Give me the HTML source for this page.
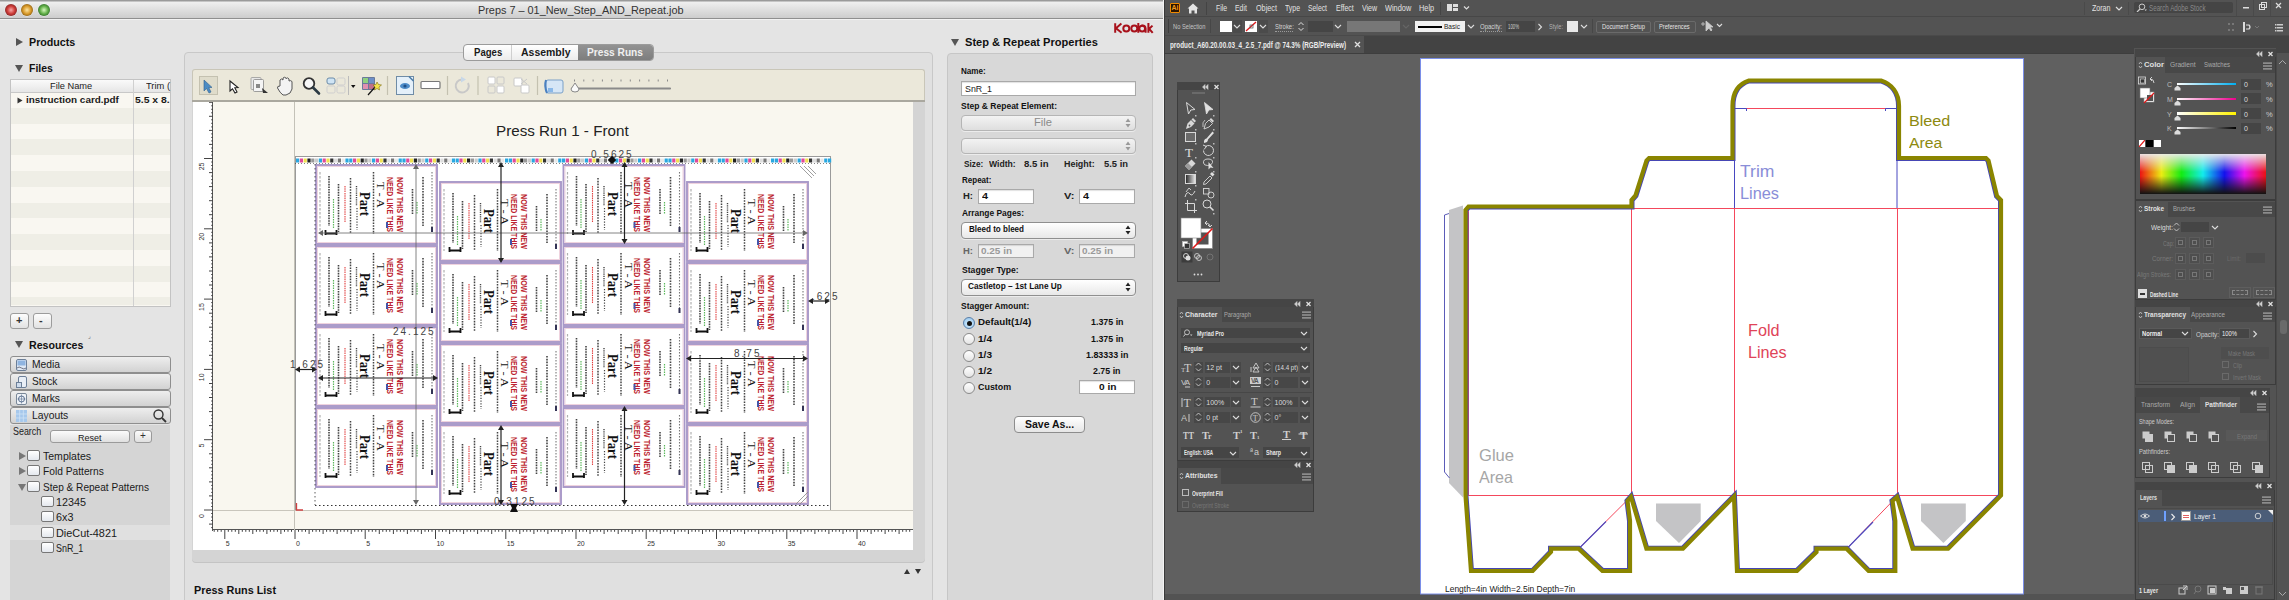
<!DOCTYPE html><html><head><meta charset="utf-8"><style>
*{box-sizing:border-box;margin:0;padding:0}
html,body{width:2289px;height:600px;overflow:hidden;background:#e6e6e6}
body{position:relative;font-family:"Liberation Sans",sans-serif;}
.a{position:absolute}
.t{position:absolute;white-space:nowrap;line-height:1}
.b{font-weight:bold}
</style></head><body>
<div class="a" style="left:0px;top:0px;width:1163px;height:600px;background:#e4e4e4"></div>
<div class="a" style="left:0px;top:0px;width:1163px;height:18px;background:linear-gradient(#9a9a9a 0,#9a9a9a 1px,#efefef 2px,#cdcdcd 100%)"></div>
<div class="a" style="left:5.300000000000001px;top:3.5px;width:12px;height:12px;border-radius:50%;background:radial-gradient(circle farthest-side at 50% 50%,#f8a8a8 0%,#cc3a36 65%,#8e2a2a 100%);box-shadow:0 0 0 0.5px rgba(255,255,255,.6)"></div>
<div class="a" style="left:21.3px;top:3.5px;width:12px;height:12px;border-radius:50%;background:radial-gradient(circle farthest-side at 50% 50%,#fde4a0 0%,#d99a2a 65%,#9a6a18 100%);box-shadow:0 0 0 0.5px rgba(255,255,255,.6)"></div>
<div class="a" style="left:37.5px;top:3.5px;width:12px;height:12px;border-radius:50%;background:radial-gradient(circle farthest-side at 50% 50%,#d8f8c0 0%,#62b048 65%,#3a7a30 100%);box-shadow:0 0 0 0.5px rgba(255,255,255,.6)"></div>
<div class="a" style="left:0px;top:18px;width:1163px;height:1px;background:#8f8f8f"></div>
<div class="a" style="left:0px;top:19px;width:1163px;height:1px;background:#f2f2f2"></div>
<div class="t" style="left:478.3px;top:4.51px;font-size:10.5px;color:#333;font-family:'Liberation Sans';transform-origin:0 0;transform:scaleX(1.0355);">Preps 7 – 01_New_Step_AND_Repeat.job</div>
<div class="a" style="left:1163px;top:0px;width:1px;height:600px;background:#f4f4f4"></div>
<div class="a" style="left:16px;top:38px;width:0;height:0;border-top:4px solid transparent;border-bottom:4px solid transparent;border-left:7px solid #555"></div>
<div class="t" style="left:28.7px;top:36.89px;font-size:11px;color:#111;font-family:'Liberation Sans';font-weight:bold;transform-origin:0 0;transform:scaleX(0.9712);">Products</div>
<div class="a" style="left:15px;top:65px;width:0;height:0;border-left:4px solid transparent;border-right:4px solid transparent;border-top:7px solid #555"></div>
<div class="t" style="left:28.7px;top:62.69px;font-size:11px;color:#111;font-family:'Liberation Sans';font-weight:bold;transform-origin:0 0;transform:scaleX(0.9495);">Files</div>
<div class="a" style="left:10px;top:79px;width:161px;height:228px;background:#f9f7f1;border:1px solid #c3c3c3"></div>
<div class="a" style="left:11px;top:107.8px;width:159px;height:15.8px;background:#efeee6"></div>
<div class="a" style="left:11px;top:139.4px;width:159px;height:15.8px;background:#efeee6"></div>
<div class="a" style="left:11px;top:171.0px;width:159px;height:15.8px;background:#efeee6"></div>
<div class="a" style="left:11px;top:202.60000000000002px;width:159px;height:15.8px;background:#efeee6"></div>
<div class="a" style="left:11px;top:234.20000000000002px;width:159px;height:15.8px;background:#efeee6"></div>
<div class="a" style="left:11px;top:265.8px;width:159px;height:15.8px;background:#efeee6"></div>
<div class="a" style="left:11px;top:297.4px;width:159px;height:7.600000000000023px;background:#efeee6"></div>
<div class="a" style="left:11px;top:80px;width:159px;height:13px;background:linear-gradient(#fafafa,#e6e6e6);border-bottom:1px solid #c8c8c8"></div>
<div class="a" style="left:133px;top:80px;width:1px;height:226px;background:#d0d0d0"></div>
<div class="t" style="left:50px;top:80.66px;font-size:9.5px;color:#222;font-family:'Liberation Sans';transform-origin:0 0;transform:scaleX(0.9749);">File Name</div>
<div class="t" style="left:146px;top:80.66px;font-size:9.5px;color:#222;font-family:'Liberation Sans';transform-origin:0 0;transform:scaleX(0.9820);">Trim (</div>
<svg class="a" style="left:17px;top:97px" width="6" height="7"><path d="M0.5 0.5 L5.5 3.5 L0.5 6.5Z" fill="#333"/></svg>
<div class="t" style="left:25.8px;top:95.26px;font-size:9.5px;color:#1a1a1a;font-family:'Liberation Sans';font-weight:bold;transform-origin:0 0;transform:scaleX(1.0416);">instruction card.pdf</div>
<div class="t" style="left:135.3px;top:95.26px;font-size:9.5px;color:#1a1a1a;font-family:'Liberation Sans';font-weight:bold;transform-origin:0 0;transform:scaleX(1.0950);">5.5 x 8.</div>
<div class="a" style="left:10px;top:313px;width:19px;height:16px;background:linear-gradient(#fdfdfd,#e2e2e2);border:1px solid #9c9c9c;border-radius:3px"></div>
<div class="t" style="left:16px;top:315px;font-size:11px;color:#333;font-weight:bold">+</div>
<div class="a" style="left:33px;top:313px;width:19px;height:16px;background:linear-gradient(#fdfdfd,#e2e2e2);border:1px solid #9c9c9c;border-radius:3px"></div>
<div class="t" style="left:39px;top:315px;font-size:11px;color:#333;font-weight:bold">-</div>
<div class="t" style="left:88px;top:333px;font-size:6px;color:#666;">⌟</div>
<div class="a" style="left:15px;top:341px;width:0;height:0;border-left:4px solid transparent;border-right:4px solid transparent;border-top:7px solid #555"></div>
<div class="t" style="left:28.6px;top:339.69px;font-size:11px;color:#111;font-family:'Liberation Sans';font-weight:bold;transform-origin:0 0;transform:scaleX(0.9671);">Resources</div>
<div class="a" style="left:10px;top:356px;width:161px;height:17px;background:linear-gradient(#eeeeee,#d2d2d2);border:1px solid #8e8e8e;border-radius:3px"></div>
<svg class="a" style="left:16px;top:358.5px" width="12" height="13"><rect x="0.5" y="0.5" width="10" height="11" rx="1.5" fill="#dfe9f5" stroke="#6c7f98"/><rect x="1.5" y="1.5" width="8" height="5" fill="#8fb4e0"/><path d="M1 9 Q3 7 5.5 9 Q8 11 10 9" fill="none" stroke="#556" stroke-width="0.8"/></svg>
<div class="t" style="left:32px;top:359.31px;font-size:10.5px;color:#1a1a1a;font-family:'Liberation Sans';transform-origin:0 0;transform:scaleX(0.9792);">Media</div>
<div class="a" style="left:10px;top:373px;width:161px;height:17px;background:linear-gradient(#eeeeee,#d2d2d2);border:1px solid #8e8e8e;border-radius:3px"></div>
<svg class="a" style="left:16px;top:375.5px" width="12" height="13"><rect x="2.5" y="0.5" width="8" height="11" rx="1.5" fill="#e8eef6" stroke="#6c7f98"/><rect x="0.5" y="6.5" width="5" height="5" fill="#cfdcec" stroke="#6c7f98"/></svg>
<div class="t" style="left:32px;top:376.31px;font-size:10.5px;color:#1a1a1a;font-family:'Liberation Sans';transform-origin:0 0;transform:scaleX(0.9673);">Stock</div>
<div class="a" style="left:10px;top:390px;width:161px;height:17px;background:linear-gradient(#eeeeee,#d2d2d2);border:1px solid #8e8e8e;border-radius:3px"></div>
<svg class="a" style="left:16px;top:392.5px" width="12" height="13"><rect x="0.5" y="0.5" width="10" height="11" rx="1.5" fill="#eef2f7" stroke="#7a8898"/><circle cx="5.5" cy="6" r="3" fill="none" stroke="#5a7090"/><path d="M5.5 1.5 L5.5 10.5 M1.5 6 L9.5 6" stroke="#5a7090" stroke-width="0.6"/></svg>
<div class="t" style="left:32px;top:393.31px;font-size:10.5px;color:#1a1a1a;font-family:'Liberation Sans';transform-origin:0 0;transform:scaleX(0.9797);">Marks</div>
<div class="a" style="left:10px;top:407px;width:161px;height:17px;background:linear-gradient(#eeeeee,#d2d2d2);border:1px solid #8e8e8e;border-radius:3px"></div>
<svg class="a" style="left:16px;top:409.5px" width="12" height="13"><rect x="0" y="0" width="11" height="12" fill="#a6c8ec"/><path d="M0 4 L11 4 M0 8 L11 8 M3.7 0 L3.7 12 M7.3 0 L7.3 12" stroke="#cfe2f6" stroke-width="0.8"/></svg>
<div class="t" style="left:32px;top:410.31px;font-size:10.5px;color:#1a1a1a;font-family:'Liberation Sans';transform-origin:0 0;transform:scaleX(0.9871);">Layouts</div>
<svg class="a" style="left:152px;top:408px" width="16" height="16"><circle cx="6.5" cy="6.5" r="4.5" fill="none" stroke="#333" stroke-width="1.4"/><line x1="10" y1="10" x2="14" y2="14" stroke="#333" stroke-width="1.8"/></svg>
<div class="a" style="left:10px;top:425px;width:160px;height:175px;background:#d5d5d5"></div>
<div class="t" style="left:13.4px;top:427.24px;font-size:10px;color:#222;font-family:'Liberation Sans';transform-origin:0 0;transform:scaleX(0.8901);">Search</div>
<div class="a" style="left:50px;top:430px;width:80px;height:13px;background:linear-gradient(#fbfbfb,#e0e0e0);border:1px solid #9a9a9a;border-radius:3px"></div>
<div class="t" style="left:77.6px;top:432.76px;font-size:9.5px;color:#222;font-family:'Liberation Sans';transform-origin:0 0;transform:scaleX(0.9510);">Reset</div>
<div class="a" style="left:134px;top:430px;width:18px;height:13px;background:linear-gradient(#fbfbfb,#e0e0e0);border:1px solid #9a9a9a;border-radius:3px"></div>
<div class="t" style="left:140px;top:431px;font-size:10px;color:#333;">+</div>
<div class="a" style="left:10px;top:525px;width:160px;height:15px;background:#e0e0e0"></div>
<div class="a" style="left:19px;top:452px;width:0;height:0;border-top:4px solid transparent;border-bottom:4px solid transparent;border-left:7px solid #777"></div>
<div class="a" style="left:27px;top:450px;width:13px;height:11px;background:linear-gradient(#ffffff,#e4e8ee);border:1px solid #777;border-radius:2px"></div>
<div class="t" style="left:42.7px;top:451.11px;font-size:10.5px;color:#1a1a1a;font-family:'Liberation Sans';transform-origin:0 0;transform:scaleX(1.0031);">Templates</div>
<div class="a" style="left:19px;top:467px;width:0;height:0;border-top:4px solid transparent;border-bottom:4px solid transparent;border-left:7px solid #777"></div>
<div class="a" style="left:27px;top:465px;width:13px;height:11px;background:linear-gradient(#ffffff,#e4e8ee);border:1px solid #777;border-radius:2px"></div>
<div class="t" style="left:42.7px;top:466.11px;font-size:10.5px;color:#1a1a1a;font-family:'Liberation Sans';transform-origin:0 0;transform:scaleX(0.9737);">Fold Patterns</div>
<div class="a" style="left:18px;top:484px;width:0;height:0;border-left:4px solid transparent;border-right:4px solid transparent;border-top:7px solid #777"></div>
<div class="a" style="left:27px;top:481px;width:13px;height:11px;background:linear-gradient(#ffffff,#e4e8ee);border:1px solid #777;border-radius:2px"></div>
<div class="t" style="left:42.7px;top:482.11px;font-size:10.5px;color:#1a1a1a;font-family:'Liberation Sans';transform-origin:0 0;transform:scaleX(0.9609);">Step &amp; Repeat Patterns</div>
<div class="a" style="left:41px;top:496px;width:13px;height:11px;background:linear-gradient(#ffffff,#e4e8ee);border:1px solid #777;border-radius:2px"></div>
<div class="t" style="left:55.7px;top:497.11px;font-size:10.5px;color:#1a1a1a;font-family:'Liberation Sans';transform-origin:0 0;transform:scaleX(1.0276);">12345</div>
<div class="a" style="left:41px;top:511px;width:13px;height:11px;background:linear-gradient(#ffffff,#e4e8ee);border:1px solid #777;border-radius:2px"></div>
<div class="t" style="left:55.7px;top:512.11px;font-size:10.5px;color:#1a1a1a;font-family:'Liberation Sans';transform-origin:0 0;transform:scaleX(1.0279);">6x3</div>
<div class="a" style="left:41px;top:527px;width:13px;height:11px;background:linear-gradient(#ffffff,#e4e8ee);border:1px solid #777;border-radius:2px"></div>
<div class="t" style="left:55.7px;top:528.11px;font-size:10.5px;color:#1a1a1a;font-family:'Liberation Sans';transform-origin:0 0;transform:scaleX(1.0348);">DieCut-4821</div>
<div class="a" style="left:41px;top:542px;width:13px;height:11px;background:linear-gradient(#ffffff,#e4e8ee);border:1px solid #777;border-radius:2px"></div>
<div class="t" style="left:55.7px;top:543.11px;font-size:10.5px;color:#1a1a1a;font-family:'Liberation Sans';transform-origin:0 0;transform:scaleX(0.8504);">SnR_1</div>
<div class="a" style="left:184px;top:52px;width:749px;height:560px;background:#e0e0e0;border:1px solid #c8c8c8;border-radius:4px"></div>
<div class="a" style="left:463px;top:44px;width:191px;height:17px;border:1px solid #9b9b9b;border-radius:4px;background:linear-gradient(#ffffff,#ececec);overflow:hidden"><div class="a" style="left:47px;top:0;width:1px;height:15px;background:#cfcfcf"></div><div class="a" style="left:114px;top:0;width:76px;height:15px;background:linear-gradient(#939393,#7d7d7d)"></div></div>
<div class="t" style="left:473.8px;top:46.81px;font-size:10.5px;color:#1a1a1a;font-family:'Liberation Sans';font-weight:bold;transform-origin:0 0;transform:scaleX(0.9116);">Pages</div>
<div class="t" style="left:520.5px;top:46.81px;font-size:10.5px;color:#1a1a1a;font-family:'Liberation Sans';font-weight:bold;transform-origin:0 0;transform:scaleX(0.9979);">Assembly</div>
<div class="t" style="left:587px;top:46.81px;font-size:10.5px;color:#f0f0f0;font-family:'Liberation Sans';font-weight:bold;transform-origin:0 0;transform:scaleX(0.9693);">Press Runs</div>
<div class="a" style="left:192px;top:69px;width:733px;height:33px;background:#ebe8da;border:1px solid #c9c6b8;border-bottom:1.5px solid #a9a79f;border-radius:3px 3px 0 0"></div>
<svg class="a" style="left:192px;top:69px" width="733" height="32" viewBox="192 69 733 32"><rect x="199.5" y="76.5" width="18" height="18" fill="#dfdccb" stroke="#c4c1b0" stroke-width="1"/><path d="M204 80 L204 91 L206.5 88.5 L209 93 L211 92 L208.8 87.6 L212 87.4Z" fill="#4a8bc4" stroke="#2f5f8f" stroke-width="0.6"/><path d="M230 81 L230 91 L232.5 88.8 L235 93 L237 92 L234.8 87.8 L238 87.6Z" fill="#fff" stroke="#222" stroke-width="1.1"/><rect x="251" y="77.5" width="10" height="12" rx="1" fill="#e8e8e8" stroke="#999" stroke-width="0.8"/><rect x="253.5" y="79.5" width="10" height="12" rx="1" fill="#f4f4f4" stroke="#888" stroke-width="0.8"/><rect x="256" y="84" width="4" height="4" fill="#888"/><path d="M262 88 L268 93 L263 93Z" fill="#333"/><path d="M280 85 L280 80 Q281.5 78 283 80 L283 78 Q284.5 76.5 286 78 L286 78.5 Q287.5 77 289 79 L289 81 Q290.5 80 292 81.5 L292 89 Q291 94 286 95 L283 95 Q280 93 277.5 88 Q277 86 280 86Z" fill="#f3f3f3" stroke="#555" stroke-width="1"/><circle cx="309" cy="83.5" r="5.3" fill="#f7f7f7" stroke="#333" stroke-width="1.8"/><line x1="313" y1="87.5" x2="319" y2="93.5" stroke="#2c3a44" stroke-width="2.6" stroke-linecap="round"/><rect x="327" y="78" width="8" height="6" rx="2" fill="#cfe4f4" stroke="#6a8aa8" stroke-width="1"/><rect x="337" y="78" width="8" height="7" rx="1.5" fill="none" stroke="#cfcfcf" stroke-width="1"/><rect x="327" y="86" width="8" height="7" rx="1.5" fill="none" stroke="#cfcfcf" stroke-width="1"/><rect x="337" y="86" width="8" height="7" rx="1.5" fill="none" stroke="#cfcfcf" stroke-width="1"/><line x1="348.5" y1="76" x2="348.5" y2="95" stroke="#bbb"/><path d="M351 85 L355.5 85 L353.2 88Z" fill="#111"/><rect x="362" y="77" width="13" height="13" rx="1" fill="#6a7a9a"/><rect x="363" y="78" width="5" height="5" fill="#8fd080"/><rect x="369" y="78" width="5" height="5" fill="#6e8fc8"/><rect x="363" y="84" width="5" height="5" fill="#e090b0"/><rect x="369" y="84" width="5" height="5" fill="#c0708a"/><line x1="368" y1="95" x2="376" y2="86" stroke="#111" stroke-width="1.2"/><path d="M377 82 L378.5 84.5 L381.5 85 L379 87 L379.5 90 L377 88.5 L374.5 90 L375 87 L373 85 L376 84.5Z" fill="#f2e24a" stroke="#7a6a10" stroke-width="0.6"/><line x1="387.5" y1="76" x2="387.5" y2="95" stroke="#c4c1b0" stroke-width="1.2"/><rect x="396.5" y="76.5" width="17" height="18" fill="#e4f0fa" stroke="#6f8ca6" stroke-width="1"/><path d="M409 76.5 L413.5 81" stroke="#4a7aa6" stroke-width="1.5"/><ellipse cx="405" cy="86" rx="5" ry="3" fill="#4d8cc8"/><circle cx="405" cy="86" r="1.6" fill="#1e4f88"/><rect x="421" y="81.5" width="19" height="7" rx="1" fill="#fff" stroke="#777" stroke-width="1.2"/><line x1="447.5" y1="76" x2="447.5" y2="95" stroke="#c4c1b0" stroke-width="1.2"/><path d="M468 83 A6.5 6.5 0 1 1 462 79.5" fill="none" stroke="#c8c8c8" stroke-width="2"/><path d="M461 76.5 L466 79.5 L461 82.5Z" fill="#c8d8e8"/><line x1="478" y1="76" x2="478" y2="95" stroke="#c4c1b0" stroke-width="1.2"/><rect x="488" y="77" width="7" height="7" rx="1" fill="#fff" stroke="#c8c8c8" stroke-width="1"/><rect x="497" y="77" width="7" height="7" rx="1" fill="none" stroke="#c8c8c8" stroke-width="1"/><rect x="488" y="86" width="7" height="7" rx="1" fill="none" stroke="#c8c8c8" stroke-width="1"/><rect x="497" y="86" width="7" height="7" rx="1" fill="#fff" stroke="#c8c8c8" stroke-width="1"/><rect x="514" y="78" width="8" height="8" rx="1" fill="#fff" stroke="#c8c8c8"/><rect x="521" y="85" width="8" height="8" rx="1" fill="#fff" stroke="#c8c8c8"/><path d="M521 79 L527 84 M527 79 L521 84" stroke="#c8c8c8"/><line x1="537.5" y1="76" x2="537.5" y2="95" stroke="#c4c1b0" stroke-width="1.2"/><rect x="546" y="80" width="17" height="13" rx="2" fill="#d6e6f6" stroke="#7aa0c8" stroke-width="1"/><path d="M546 80 Q544 86 547 93" fill="none" stroke="#4a80c0" stroke-width="2"/><rect x="548" y="88" width="5" height="4" fill="#8ab8e8"/><line x1="572" y1="88.5" x2="670" y2="88.5" stroke="#8a8a8a" stroke-width="2.2" stroke-linecap="round"/><rect x="574.0" y="79.5" width="1" height="2" fill="#8a8a8a"/><rect x="583.3" y="79.5" width="1" height="2" fill="#8a8a8a"/><rect x="592.6" y="79.5" width="1" height="2" fill="#8a8a8a"/><rect x="601.9" y="79.5" width="1" height="2" fill="#8a8a8a"/><rect x="611.2" y="79.5" width="1" height="2" fill="#8a8a8a"/><rect x="620.5" y="79.5" width="1" height="2" fill="#8a8a8a"/><rect x="629.8" y="79.5" width="1" height="2" fill="#8a8a8a"/><rect x="639.1" y="79.5" width="1" height="2" fill="#8a8a8a"/><rect x="648.4" y="79.5" width="1" height="2" fill="#8a8a8a"/><rect x="657.7" y="79.5" width="1" height="2" fill="#8a8a8a"/><rect x="667.0" y="79.5" width="1" height="2" fill="#8a8a8a"/><path d="M575 83 L579 89 Q579 92 575 92 Q571 92 571 89Z" fill="#fafafa" stroke="#888" stroke-width="1"/></svg>
<div class="a" style="left:192px;top:101px;width:733px;height:461px;background:#d4d4d4;border-radius:0 0 4px 4px;box-shadow:0 1px 0 #c4c4c4"></div>
<div class="a" style="left:193px;top:101px;width:720px;height:449px;background:#f9f7ef"></div>
<div class="a" style="left:193px;top:101px;width:20px;height:449px;background:#ffffff"></div>
<div class="a" style="left:193px;top:530px;width:720px;height:20px;background:#ffffff"></div>
<div class="a" style="left:212px;top:101px;width:1px;height:430px;background:#555"></div>
<div class="a" style="left:212px;top:529px;width:701px;height:1px;background:#555"></div>
<div class="a" style="left:294px;top:101px;width:1px;height:429px;background:#c4c2b8"></div>
<svg class="a" style="left:0;top:0" width="1163" height="600" viewBox="0 0 1163 600"><defs><clipPath id="cv"><rect x="193" y="101" width="720" height="449"/></clipPath><symbol id="card" viewBox="0 0 123 81" width="123" height="81" overflow="visible"><rect x="1" y="1" width="121" height="79" fill="#fff" stroke="#a898c8" stroke-width="1.9"/><rect x="2.5" y="2.5" width="118" height="76" fill="none" stroke="#efd3de" stroke-width="1"/><line x1="5" y1="8" x2="5" y2="70" stroke="#b0b0b0" stroke-width="1.2" stroke-dasharray="2.5 1.5" opacity="1"/><line x1="14" y1="12" x2="14" y2="62" stroke="#444" stroke-width="1.6" stroke-dasharray="1.6 1" opacity="1"/><line x1="18.5" y1="35" x2="18.5" y2="65" stroke="#5cb85c" stroke-width="1.2" stroke-dasharray="1.5 1" opacity="1"/><line x1="23.5" y1="20" x2="23.5" y2="68" stroke="#444" stroke-width="1.6" stroke-dasharray="1.6 1" opacity="1"/><line x1="30" y1="22" x2="30" y2="58" stroke="#e04040" stroke-width="1.1" stroke-dasharray="1.5 0.8" opacity="1"/><line x1="35.5" y1="14" x2="35.5" y2="70" stroke="#444" stroke-width="1.5" stroke-dasharray="1.6 1.2" opacity="1"/><line x1="41.5" y1="22" x2="41.5" y2="42" stroke="#444" stroke-width="1.4" stroke-dasharray="1.2 1" opacity="1"/><line x1="42" y1="44" x2="42" y2="66" stroke="#444" stroke-width="1.2" stroke-dasharray="1.2 1.5" opacity="1"/><text transform="translate(45,28) rotate(90)" font-family="Liberation Serif" font-size="14" font-weight="bold" fill="#111" textLength="24" lengthAdjust="spacingAndGlyphs">Part</text><line x1="58.5" y1="8" x2="58.5" y2="70" stroke="#444" stroke-width="1.5" stroke-dasharray="1.6 1.2" opacity="1"/><text transform="translate(62,18) rotate(90)" font-family="Liberation Serif" font-size="11" fill="#111" textLength="26" lengthAdjust="spacingAndGlyphs">T - A</text><text transform="translate(71.5,13) rotate(90)" font-family="Liberation Sans" font-size="9.5" font-weight="bold" fill="#bc1f30" textLength="55" lengthAdjust="spacingAndGlyphs">NEED LIKE THIS</text><text transform="translate(81.5,13) rotate(90)" font-family="Liberation Sans" font-size="9.5" font-weight="bold" fill="#bc1f30" textLength="55" lengthAdjust="spacingAndGlyphs">NOW THIS NEW</text><rect x="71" y="58" width="2" height="6" fill="#4455aa"/><line x1="97.5" y1="25" x2="97.5" y2="50" stroke="#444" stroke-width="1.6" stroke-dasharray="1.6 1" opacity="1"/><line x1="102" y1="38" x2="102" y2="50" stroke="#5cb85c" stroke-width="1.2" stroke-dasharray="1.5 1" opacity="1"/><line x1="108" y1="13" x2="108" y2="62" stroke="#444" stroke-width="1.6" stroke-dasharray="1.6 1.2" opacity="1"/><line x1="117" y1="8" x2="117" y2="68" stroke="#777" stroke-width="1.1" stroke-dasharray="1.5 1.5" opacity="1"/><rect x="116" y="63" width="2" height="5" fill="#335"/><path d="M10 69.5 L22 69.5 M10.5 66 L10.5 71 M21.5 66 L21.5 71" stroke="#111" stroke-width="1.8"/></symbol></defs><g clip-path="url(#cv)"><g stroke="#444" stroke-width="1"><line x1="211.2" y1="527.6" x2="213" y2="527.6"/><line x1="209" y1="524.1" x2="213" y2="524.1"/><line x1="211.2" y1="520.5" x2="213" y2="520.5"/><line x1="211.2" y1="517.0" x2="213" y2="517.0"/><line x1="211.2" y1="513.5" x2="213" y2="513.5"/><line x1="204" y1="510.0" x2="213" y2="510.0"/><line x1="211.2" y1="506.5" x2="213" y2="506.5"/><line x1="211.2" y1="503.0" x2="213" y2="503.0"/><line x1="211.2" y1="499.5" x2="213" y2="499.5"/><line x1="209" y1="495.9" x2="213" y2="495.9"/><line x1="211.2" y1="492.4" x2="213" y2="492.4"/><line x1="211.2" y1="488.9" x2="213" y2="488.9"/><line x1="211.2" y1="485.4" x2="213" y2="485.4"/><line x1="209" y1="481.9" x2="213" y2="481.9"/><line x1="211.2" y1="478.4" x2="213" y2="478.4"/><line x1="211.2" y1="474.9" x2="213" y2="474.9"/><line x1="211.2" y1="471.3" x2="213" y2="471.3"/><line x1="209" y1="467.8" x2="213" y2="467.8"/><line x1="211.2" y1="464.3" x2="213" y2="464.3"/><line x1="211.2" y1="460.8" x2="213" y2="460.8"/><line x1="211.2" y1="457.3" x2="213" y2="457.3"/><line x1="209" y1="453.8" x2="213" y2="453.8"/><line x1="211.2" y1="450.2" x2="213" y2="450.2"/><line x1="211.2" y1="446.7" x2="213" y2="446.7"/><line x1="211.2" y1="443.2" x2="213" y2="443.2"/><line x1="204" y1="439.7" x2="213" y2="439.7"/><line x1="211.2" y1="436.2" x2="213" y2="436.2"/><line x1="211.2" y1="432.7" x2="213" y2="432.7"/><line x1="211.2" y1="429.2" x2="213" y2="429.2"/><line x1="209" y1="425.6" x2="213" y2="425.6"/><line x1="211.2" y1="422.1" x2="213" y2="422.1"/><line x1="211.2" y1="418.6" x2="213" y2="418.6"/><line x1="211.2" y1="415.1" x2="213" y2="415.1"/><line x1="209" y1="411.6" x2="213" y2="411.6"/><line x1="211.2" y1="408.1" x2="213" y2="408.1"/><line x1="211.2" y1="404.6" x2="213" y2="404.6"/><line x1="211.2" y1="401.0" x2="213" y2="401.0"/><line x1="209" y1="397.5" x2="213" y2="397.5"/><line x1="211.2" y1="394.0" x2="213" y2="394.0"/><line x1="211.2" y1="390.5" x2="213" y2="390.5"/><line x1="211.2" y1="387.0" x2="213" y2="387.0"/><line x1="209" y1="383.5" x2="213" y2="383.5"/><line x1="211.2" y1="379.9" x2="213" y2="379.9"/><line x1="211.2" y1="376.4" x2="213" y2="376.4"/><line x1="211.2" y1="372.9" x2="213" y2="372.9"/><line x1="204" y1="369.4" x2="213" y2="369.4"/><line x1="211.2" y1="365.9" x2="213" y2="365.9"/><line x1="211.2" y1="362.4" x2="213" y2="362.4"/><line x1="211.2" y1="358.9" x2="213" y2="358.9"/><line x1="209" y1="355.3" x2="213" y2="355.3"/><line x1="211.2" y1="351.8" x2="213" y2="351.8"/><line x1="211.2" y1="348.3" x2="213" y2="348.3"/><line x1="211.2" y1="344.8" x2="213" y2="344.8"/><line x1="209" y1="341.3" x2="213" y2="341.3"/><line x1="211.2" y1="337.8" x2="213" y2="337.8"/><line x1="211.2" y1="334.2" x2="213" y2="334.2"/><line x1="211.2" y1="330.7" x2="213" y2="330.7"/><line x1="209" y1="327.2" x2="213" y2="327.2"/><line x1="211.2" y1="323.7" x2="213" y2="323.7"/><line x1="211.2" y1="320.2" x2="213" y2="320.2"/><line x1="211.2" y1="316.7" x2="213" y2="316.7"/><line x1="209" y1="313.2" x2="213" y2="313.2"/><line x1="211.2" y1="309.6" x2="213" y2="309.6"/><line x1="211.2" y1="306.1" x2="213" y2="306.1"/><line x1="211.2" y1="302.6" x2="213" y2="302.6"/><line x1="204" y1="299.1" x2="213" y2="299.1"/><line x1="211.2" y1="295.6" x2="213" y2="295.6"/><line x1="211.2" y1="292.1" x2="213" y2="292.1"/><line x1="211.2" y1="288.6" x2="213" y2="288.6"/><line x1="209" y1="285.0" x2="213" y2="285.0"/><line x1="211.2" y1="281.5" x2="213" y2="281.5"/><line x1="211.2" y1="278.0" x2="213" y2="278.0"/><line x1="211.2" y1="274.5" x2="213" y2="274.5"/><line x1="209" y1="271.0" x2="213" y2="271.0"/><line x1="211.2" y1="267.5" x2="213" y2="267.5"/><line x1="211.2" y1="263.9" x2="213" y2="263.9"/><line x1="211.2" y1="260.4" x2="213" y2="260.4"/><line x1="209" y1="256.9" x2="213" y2="256.9"/><line x1="211.2" y1="253.4" x2="213" y2="253.4"/><line x1="211.2" y1="249.9" x2="213" y2="249.9"/><line x1="211.2" y1="246.4" x2="213" y2="246.4"/><line x1="209" y1="242.9" x2="213" y2="242.9"/><line x1="211.2" y1="239.3" x2="213" y2="239.3"/><line x1="211.2" y1="235.8" x2="213" y2="235.8"/><line x1="211.2" y1="232.3" x2="213" y2="232.3"/><line x1="204" y1="228.8" x2="213" y2="228.8"/><line x1="211.2" y1="225.3" x2="213" y2="225.3"/><line x1="211.2" y1="221.8" x2="213" y2="221.8"/><line x1="211.2" y1="218.3" x2="213" y2="218.3"/><line x1="209" y1="214.7" x2="213" y2="214.7"/><line x1="211.2" y1="211.2" x2="213" y2="211.2"/><line x1="211.2" y1="207.7" x2="213" y2="207.7"/><line x1="211.2" y1="204.2" x2="213" y2="204.2"/><line x1="209" y1="200.7" x2="213" y2="200.7"/><line x1="211.2" y1="197.2" x2="213" y2="197.2"/><line x1="211.2" y1="193.6" x2="213" y2="193.6"/><line x1="211.2" y1="190.1" x2="213" y2="190.1"/><line x1="209" y1="186.6" x2="213" y2="186.6"/><line x1="211.2" y1="183.1" x2="213" y2="183.1"/><line x1="211.2" y1="179.6" x2="213" y2="179.6"/><line x1="211.2" y1="176.1" x2="213" y2="176.1"/><line x1="209" y1="172.6" x2="213" y2="172.6"/><line x1="211.2" y1="169.0" x2="213" y2="169.0"/><line x1="211.2" y1="165.5" x2="213" y2="165.5"/><line x1="211.2" y1="162.0" x2="213" y2="162.0"/><line x1="204" y1="158.5" x2="213" y2="158.5"/><line x1="211.2" y1="155.0" x2="213" y2="155.0"/><line x1="211.2" y1="151.5" x2="213" y2="151.5"/><line x1="211.2" y1="148.0" x2="213" y2="148.0"/><line x1="209" y1="144.4" x2="213" y2="144.4"/><line x1="211.2" y1="140.9" x2="213" y2="140.9"/><line x1="211.2" y1="137.4" x2="213" y2="137.4"/><line x1="211.2" y1="133.9" x2="213" y2="133.9"/><line x1="209" y1="130.4" x2="213" y2="130.4"/><line x1="211.2" y1="126.9" x2="213" y2="126.9"/><line x1="211.2" y1="123.3" x2="213" y2="123.3"/><line x1="211.2" y1="119.8" x2="213" y2="119.8"/><line x1="209" y1="116.3" x2="213" y2="116.3"/><line x1="211.2" y1="112.8" x2="213" y2="112.8"/><line x1="211.2" y1="109.3" x2="213" y2="109.3"/><line x1="211.2" y1="105.8" x2="213" y2="105.8"/><line x1="209" y1="102.3" x2="213" y2="102.3"/><line x1="214.2" y1="530" x2="214.2" y2="531.8"/><line x1="217.7" y1="530" x2="217.7" y2="531.8"/><line x1="221.2" y1="530" x2="221.2" y2="531.8"/><line x1="224.8" y1="530" x2="224.8" y2="539"/><line x1="228.3" y1="530" x2="228.3" y2="531.8"/><line x1="231.8" y1="530" x2="231.8" y2="531.8"/><line x1="235.3" y1="530" x2="235.3" y2="531.8"/><line x1="238.8" y1="530" x2="238.8" y2="534"/><line x1="242.3" y1="530" x2="242.3" y2="531.8"/><line x1="245.8" y1="530" x2="245.8" y2="531.8"/><line x1="249.3" y1="530" x2="249.3" y2="531.8"/><line x1="252.8" y1="530" x2="252.8" y2="534"/><line x1="256.4" y1="530" x2="256.4" y2="531.8"/><line x1="259.9" y1="530" x2="259.9" y2="531.8"/><line x1="263.4" y1="530" x2="263.4" y2="531.8"/><line x1="266.9" y1="530" x2="266.9" y2="534"/><line x1="270.4" y1="530" x2="270.4" y2="531.8"/><line x1="273.9" y1="530" x2="273.9" y2="531.8"/><line x1="277.4" y1="530" x2="277.4" y2="531.8"/><line x1="280.9" y1="530" x2="280.9" y2="534"/><line x1="284.5" y1="530" x2="284.5" y2="531.8"/><line x1="288.0" y1="530" x2="288.0" y2="531.8"/><line x1="291.5" y1="530" x2="291.5" y2="531.8"/><line x1="295.0" y1="530" x2="295.0" y2="539"/><line x1="298.5" y1="530" x2="298.5" y2="531.8"/><line x1="302.0" y1="530" x2="302.0" y2="531.8"/><line x1="305.5" y1="530" x2="305.5" y2="531.8"/><line x1="309.1" y1="530" x2="309.1" y2="534"/><line x1="312.6" y1="530" x2="312.6" y2="531.8"/><line x1="316.1" y1="530" x2="316.1" y2="531.8"/><line x1="319.6" y1="530" x2="319.6" y2="531.8"/><line x1="323.1" y1="530" x2="323.1" y2="534"/><line x1="326.6" y1="530" x2="326.6" y2="531.8"/><line x1="330.1" y1="530" x2="330.1" y2="531.8"/><line x1="333.6" y1="530" x2="333.6" y2="531.8"/><line x1="337.1" y1="530" x2="337.1" y2="534"/><line x1="340.7" y1="530" x2="340.7" y2="531.8"/><line x1="344.2" y1="530" x2="344.2" y2="531.8"/><line x1="347.7" y1="530" x2="347.7" y2="531.8"/><line x1="351.2" y1="530" x2="351.2" y2="534"/><line x1="354.7" y1="530" x2="354.7" y2="531.8"/><line x1="358.2" y1="530" x2="358.2" y2="531.8"/><line x1="361.7" y1="530" x2="361.7" y2="531.8"/><line x1="365.2" y1="530" x2="365.2" y2="539"/><line x1="368.8" y1="530" x2="368.8" y2="531.8"/><line x1="372.3" y1="530" x2="372.3" y2="531.8"/><line x1="375.8" y1="530" x2="375.8" y2="531.8"/><line x1="379.3" y1="530" x2="379.3" y2="534"/><line x1="382.8" y1="530" x2="382.8" y2="531.8"/><line x1="386.3" y1="530" x2="386.3" y2="531.8"/><line x1="389.8" y1="530" x2="389.8" y2="531.8"/><line x1="393.4" y1="530" x2="393.4" y2="534"/><line x1="396.9" y1="530" x2="396.9" y2="531.8"/><line x1="400.4" y1="530" x2="400.4" y2="531.8"/><line x1="403.9" y1="530" x2="403.9" y2="531.8"/><line x1="407.4" y1="530" x2="407.4" y2="534"/><line x1="410.9" y1="530" x2="410.9" y2="531.8"/><line x1="414.4" y1="530" x2="414.4" y2="531.8"/><line x1="417.9" y1="530" x2="417.9" y2="531.8"/><line x1="421.4" y1="530" x2="421.4" y2="534"/><line x1="425.0" y1="530" x2="425.0" y2="531.8"/><line x1="428.5" y1="530" x2="428.5" y2="531.8"/><line x1="432.0" y1="530" x2="432.0" y2="531.8"/><line x1="435.5" y1="530" x2="435.5" y2="539"/><line x1="439.0" y1="530" x2="439.0" y2="531.8"/><line x1="442.5" y1="530" x2="442.5" y2="531.8"/><line x1="446.0" y1="530" x2="446.0" y2="531.8"/><line x1="449.6" y1="530" x2="449.6" y2="534"/><line x1="453.1" y1="530" x2="453.1" y2="531.8"/><line x1="456.6" y1="530" x2="456.6" y2="531.8"/><line x1="460.1" y1="530" x2="460.1" y2="531.8"/><line x1="463.6" y1="530" x2="463.6" y2="534"/><line x1="467.1" y1="530" x2="467.1" y2="531.8"/><line x1="470.6" y1="530" x2="470.6" y2="531.8"/><line x1="474.1" y1="530" x2="474.1" y2="531.8"/><line x1="477.6" y1="530" x2="477.6" y2="534"/><line x1="481.2" y1="530" x2="481.2" y2="531.8"/><line x1="484.7" y1="530" x2="484.7" y2="531.8"/><line x1="488.2" y1="530" x2="488.2" y2="531.8"/><line x1="491.7" y1="530" x2="491.7" y2="534"/><line x1="495.2" y1="530" x2="495.2" y2="531.8"/><line x1="498.7" y1="530" x2="498.7" y2="531.8"/><line x1="502.2" y1="530" x2="502.2" y2="531.8"/><line x1="505.8" y1="530" x2="505.8" y2="539"/><line x1="509.3" y1="530" x2="509.3" y2="531.8"/><line x1="512.8" y1="530" x2="512.8" y2="531.8"/><line x1="516.3" y1="530" x2="516.3" y2="531.8"/><line x1="519.8" y1="530" x2="519.8" y2="534"/><line x1="523.3" y1="530" x2="523.3" y2="531.8"/><line x1="526.8" y1="530" x2="526.8" y2="531.8"/><line x1="530.3" y1="530" x2="530.3" y2="531.8"/><line x1="533.9" y1="530" x2="533.9" y2="534"/><line x1="537.4" y1="530" x2="537.4" y2="531.8"/><line x1="540.9" y1="530" x2="540.9" y2="531.8"/><line x1="544.4" y1="530" x2="544.4" y2="531.8"/><line x1="547.9" y1="530" x2="547.9" y2="534"/><line x1="551.4" y1="530" x2="551.4" y2="531.8"/><line x1="554.9" y1="530" x2="554.9" y2="531.8"/><line x1="558.4" y1="530" x2="558.4" y2="531.8"/><line x1="562.0" y1="530" x2="562.0" y2="534"/><line x1="565.5" y1="530" x2="565.5" y2="531.8"/><line x1="569.0" y1="530" x2="569.0" y2="531.8"/><line x1="572.5" y1="530" x2="572.5" y2="531.8"/><line x1="576.0" y1="530" x2="576.0" y2="539"/><line x1="579.5" y1="530" x2="579.5" y2="531.8"/><line x1="583.0" y1="530" x2="583.0" y2="531.8"/><line x1="586.5" y1="530" x2="586.5" y2="531.8"/><line x1="590.0" y1="530" x2="590.0" y2="534"/><line x1="593.6" y1="530" x2="593.6" y2="531.8"/><line x1="597.1" y1="530" x2="597.1" y2="531.8"/><line x1="600.6" y1="530" x2="600.6" y2="531.8"/><line x1="604.1" y1="530" x2="604.1" y2="534"/><line x1="607.6" y1="530" x2="607.6" y2="531.8"/><line x1="611.1" y1="530" x2="611.1" y2="531.8"/><line x1="614.6" y1="530" x2="614.6" y2="531.8"/><line x1="618.2" y1="530" x2="618.2" y2="534"/><line x1="621.7" y1="530" x2="621.7" y2="531.8"/><line x1="625.2" y1="530" x2="625.2" y2="531.8"/><line x1="628.7" y1="530" x2="628.7" y2="531.8"/><line x1="632.2" y1="530" x2="632.2" y2="534"/><line x1="635.7" y1="530" x2="635.7" y2="531.8"/><line x1="639.2" y1="530" x2="639.2" y2="531.8"/><line x1="642.7" y1="530" x2="642.7" y2="531.8"/><line x1="646.2" y1="530" x2="646.2" y2="539"/><line x1="649.8" y1="530" x2="649.8" y2="531.8"/><line x1="653.3" y1="530" x2="653.3" y2="531.8"/><line x1="656.8" y1="530" x2="656.8" y2="531.8"/><line x1="660.3" y1="530" x2="660.3" y2="534"/><line x1="663.8" y1="530" x2="663.8" y2="531.8"/><line x1="667.3" y1="530" x2="667.3" y2="531.8"/><line x1="670.8" y1="530" x2="670.8" y2="531.8"/><line x1="674.4" y1="530" x2="674.4" y2="534"/><line x1="677.9" y1="530" x2="677.9" y2="531.8"/><line x1="681.4" y1="530" x2="681.4" y2="531.8"/><line x1="684.9" y1="530" x2="684.9" y2="531.8"/><line x1="688.4" y1="530" x2="688.4" y2="534"/><line x1="691.9" y1="530" x2="691.9" y2="531.8"/><line x1="695.4" y1="530" x2="695.4" y2="531.8"/><line x1="698.9" y1="530" x2="698.9" y2="531.8"/><line x1="702.5" y1="530" x2="702.5" y2="534"/><line x1="706.0" y1="530" x2="706.0" y2="531.8"/><line x1="709.5" y1="530" x2="709.5" y2="531.8"/><line x1="713.0" y1="530" x2="713.0" y2="531.8"/><line x1="716.5" y1="530" x2="716.5" y2="539"/><line x1="720.0" y1="530" x2="720.0" y2="531.8"/><line x1="723.5" y1="530" x2="723.5" y2="531.8"/><line x1="727.0" y1="530" x2="727.0" y2="531.8"/><line x1="730.5" y1="530" x2="730.5" y2="534"/><line x1="734.1" y1="530" x2="734.1" y2="531.8"/><line x1="737.6" y1="530" x2="737.6" y2="531.8"/><line x1="741.1" y1="530" x2="741.1" y2="531.8"/><line x1="744.6" y1="530" x2="744.6" y2="534"/><line x1="748.1" y1="530" x2="748.1" y2="531.8"/><line x1="751.6" y1="530" x2="751.6" y2="531.8"/><line x1="755.1" y1="530" x2="755.1" y2="531.8"/><line x1="758.7" y1="530" x2="758.7" y2="534"/><line x1="762.2" y1="530" x2="762.2" y2="531.8"/><line x1="765.7" y1="530" x2="765.7" y2="531.8"/><line x1="769.2" y1="530" x2="769.2" y2="531.8"/><line x1="772.7" y1="530" x2="772.7" y2="534"/><line x1="776.2" y1="530" x2="776.2" y2="531.8"/><line x1="779.7" y1="530" x2="779.7" y2="531.8"/><line x1="783.2" y1="530" x2="783.2" y2="531.8"/><line x1="786.8" y1="530" x2="786.8" y2="539"/><line x1="790.3" y1="530" x2="790.3" y2="531.8"/><line x1="793.8" y1="530" x2="793.8" y2="531.8"/><line x1="797.3" y1="530" x2="797.3" y2="531.8"/><line x1="800.8" y1="530" x2="800.8" y2="534"/><line x1="804.3" y1="530" x2="804.3" y2="531.8"/><line x1="807.8" y1="530" x2="807.8" y2="531.8"/><line x1="811.3" y1="530" x2="811.3" y2="531.8"/><line x1="814.9" y1="530" x2="814.9" y2="534"/><line x1="818.4" y1="530" x2="818.4" y2="531.8"/><line x1="821.9" y1="530" x2="821.9" y2="531.8"/><line x1="825.4" y1="530" x2="825.4" y2="531.8"/><line x1="828.9" y1="530" x2="828.9" y2="534"/><line x1="832.4" y1="530" x2="832.4" y2="531.8"/><line x1="835.9" y1="530" x2="835.9" y2="531.8"/><line x1="839.4" y1="530" x2="839.4" y2="531.8"/><line x1="843.0" y1="530" x2="843.0" y2="534"/><line x1="846.5" y1="530" x2="846.5" y2="531.8"/><line x1="850.0" y1="530" x2="850.0" y2="531.8"/><line x1="853.5" y1="530" x2="853.5" y2="531.8"/><line x1="857.0" y1="530" x2="857.0" y2="539"/><line x1="860.5" y1="530" x2="860.5" y2="531.8"/><line x1="864.0" y1="530" x2="864.0" y2="531.8"/><line x1="867.5" y1="530" x2="867.5" y2="531.8"/><line x1="871.1" y1="530" x2="871.1" y2="534"/><line x1="874.6" y1="530" x2="874.6" y2="531.8"/><line x1="878.1" y1="530" x2="878.1" y2="531.8"/><line x1="881.6" y1="530" x2="881.6" y2="531.8"/><line x1="885.1" y1="530" x2="885.1" y2="534"/><line x1="888.6" y1="530" x2="888.6" y2="531.8"/><line x1="892.1" y1="530" x2="892.1" y2="531.8"/><line x1="895.6" y1="530" x2="895.6" y2="531.8"/><line x1="899.1" y1="530" x2="899.1" y2="534"/><line x1="902.7" y1="530" x2="902.7" y2="531.8"/><line x1="906.2" y1="530" x2="906.2" y2="531.8"/><line x1="909.7" y1="530" x2="909.7" y2="531.8"/></g><text transform="translate(204,514.0) rotate(-90)" font-size="7" fill="#333" text-anchor="end" font-family="Liberation Sans">0</text><text transform="translate(204,443.7) rotate(-90)" font-size="7" fill="#333" text-anchor="end" font-family="Liberation Sans">5</text><text transform="translate(204,373.4) rotate(-90)" font-size="7" fill="#333" text-anchor="end" font-family="Liberation Sans">10</text><text transform="translate(204,303.1) rotate(-90)" font-size="7" fill="#333" text-anchor="end" font-family="Liberation Sans">15</text><text transform="translate(204,232.8) rotate(-90)" font-size="7" fill="#333" text-anchor="end" font-family="Liberation Sans">20</text><text transform="translate(204,162.5) rotate(-90)" font-size="7" fill="#333" text-anchor="end" font-family="Liberation Sans">25</text><text x="225.7" y="546" font-size="7" fill="#333" font-family="Liberation Sans">5</text><text x="295.95" y="546" font-size="7" fill="#333" font-family="Liberation Sans">0</text><text x="366.2" y="546" font-size="7" fill="#333" font-family="Liberation Sans">5</text><text x="436.45" y="546" font-size="7" fill="#333" font-family="Liberation Sans">10</text><text x="506.7" y="546" font-size="7" fill="#333" font-family="Liberation Sans">15</text><text x="576.95" y="546" font-size="7" fill="#333" font-family="Liberation Sans">20</text><text x="647.2" y="546" font-size="7" fill="#333" font-family="Liberation Sans">25</text><text x="717.45" y="546" font-size="7" fill="#333" font-family="Liberation Sans">30</text><text x="787.7" y="546" font-size="7" fill="#333" font-family="Liberation Sans">35</text><text x="857.95" y="546" font-size="7" fill="#333" font-family="Liberation Sans">40</text><rect x="295.5" y="156.5" width="535" height="354" fill="#fff" stroke="#9a9a9a" stroke-width="1"/><line x1="213" y1="510.5" x2="913" y2="510.5" stroke="#c9c6bc" stroke-width="1"/><line x1="294.5" y1="101" x2="294.5" y2="530" stroke="#c4c2b8" stroke-width="1"/><rect x="296" y="158.5" width="3.2" height="4" fill="#2aa8e0"/><rect x="299.8" y="158.5" width="3.2" height="4" fill="#e04a9a"/><rect x="303.6" y="158.5" width="3.2" height="4" fill="#f0e050"/><rect x="307.40000000000003" y="158.5" width="3.2" height="4" fill="#222"/><rect x="311.20000000000005" y="158.5" width="3.2" height="4" fill="#999"/><rect x="315.00000000000006" y="158.5" width="3.2" height="4" fill="#ccc"/><rect x="318.80000000000007" y="158.5" width="3.2" height="4" fill="#2aa8e0"/><rect x="322.6000000000001" y="158.5" width="3.2" height="4" fill="#e04a9a"/><rect x="326.4000000000001" y="158.5" width="3.2" height="4" fill="#f0e050"/><rect x="330.2000000000001" y="158.5" width="3.2" height="4" fill="#333"/><rect x="334.0000000000001" y="158.5" width="3.2" height="4" fill="#ddd"/><rect x="337.8000000000001" y="158.5" width="3.2" height="4" fill="#777"/><rect x="341.60000000000014" y="158.5" width="3.2" height="4" fill="#e8e8e8"/><rect x="345.40000000000015" y="158.5" width="3.2" height="4" fill="#2aa8e0"/><rect x="349.20000000000016" y="158.5" width="3.2" height="4" fill="#2aa8e0"/><rect x="353.00000000000017" y="158.5" width="3.2" height="4" fill="#e04a9a"/><rect x="356.8000000000002" y="158.5" width="3.2" height="4" fill="#f0e050"/><rect x="360.6000000000002" y="158.5" width="3.2" height="4" fill="#222"/><rect x="364.4000000000002" y="158.5" width="3.2" height="4" fill="#999"/><rect x="368.2000000000002" y="158.5" width="3.2" height="4" fill="#ccc"/><rect x="372.0000000000002" y="158.5" width="3.2" height="4" fill="#2aa8e0"/><rect x="375.80000000000024" y="158.5" width="3.2" height="4" fill="#e04a9a"/><rect x="379.60000000000025" y="158.5" width="3.2" height="4" fill="#f0e050"/><rect x="383.40000000000026" y="158.5" width="3.2" height="4" fill="#333"/><rect x="387.2000000000003" y="158.5" width="3.2" height="4" fill="#ddd"/><rect x="391.0000000000003" y="158.5" width="3.2" height="4" fill="#777"/><rect x="394.8000000000003" y="158.5" width="3.2" height="4" fill="#e8e8e8"/><rect x="398.6000000000003" y="158.5" width="3.2" height="4" fill="#2aa8e0"/><rect x="402.4000000000003" y="158.5" width="3.2" height="4" fill="#2aa8e0"/><rect x="406.20000000000033" y="158.5" width="3.2" height="4" fill="#e04a9a"/><rect x="410.00000000000034" y="158.5" width="3.2" height="4" fill="#f0e050"/><rect x="413.80000000000035" y="158.5" width="3.2" height="4" fill="#222"/><rect x="417.60000000000036" y="158.5" width="3.2" height="4" fill="#999"/><rect x="421.4000000000004" y="158.5" width="3.2" height="4" fill="#ccc"/><rect x="425.2000000000004" y="158.5" width="3.2" height="4" fill="#2aa8e0"/><rect x="429.0000000000004" y="158.5" width="3.2" height="4" fill="#e04a9a"/><rect x="432.8000000000004" y="158.5" width="3.2" height="4" fill="#f0e050"/><rect x="436.6000000000004" y="158.5" width="3.2" height="4" fill="#333"/><rect x="440.40000000000043" y="158.5" width="3.2" height="4" fill="#ddd"/><rect x="444.20000000000044" y="158.5" width="3.2" height="4" fill="#777"/><rect x="448.00000000000045" y="158.5" width="3.2" height="4" fill="#e8e8e8"/><rect x="451.80000000000047" y="158.5" width="3.2" height="4" fill="#2aa8e0"/><rect x="455.6000000000005" y="158.5" width="3.2" height="4" fill="#2aa8e0"/><rect x="459.4000000000005" y="158.5" width="3.2" height="4" fill="#e04a9a"/><rect x="463.2000000000005" y="158.5" width="3.2" height="4" fill="#f0e050"/><rect x="467.0000000000005" y="158.5" width="3.2" height="4" fill="#222"/><rect x="470.8000000000005" y="158.5" width="3.2" height="4" fill="#999"/><rect x="474.60000000000053" y="158.5" width="3.2" height="4" fill="#ccc"/><rect x="478.40000000000055" y="158.5" width="3.2" height="4" fill="#2aa8e0"/><rect x="482.20000000000056" y="158.5" width="3.2" height="4" fill="#e04a9a"/><rect x="486.00000000000057" y="158.5" width="3.2" height="4" fill="#f0e050"/><rect x="489.8000000000006" y="158.5" width="3.2" height="4" fill="#333"/><rect x="493.6000000000006" y="158.5" width="3.2" height="4" fill="#ddd"/><rect x="497.4000000000006" y="158.5" width="3.2" height="4" fill="#777"/><rect x="501.2000000000006" y="158.5" width="3.2" height="4" fill="#e8e8e8"/><rect x="505.0000000000006" y="158.5" width="3.2" height="4" fill="#2aa8e0"/><rect x="508.80000000000064" y="158.5" width="3.2" height="4" fill="#2aa8e0"/><rect x="512.6000000000006" y="158.5" width="3.2" height="4" fill="#e04a9a"/><rect x="516.4000000000005" y="158.5" width="3.2" height="4" fill="#f0e050"/><rect x="520.2000000000005" y="158.5" width="3.2" height="4" fill="#222"/><rect x="524.0000000000005" y="158.5" width="3.2" height="4" fill="#999"/><rect x="527.8000000000004" y="158.5" width="3.2" height="4" fill="#ccc"/><rect x="531.6000000000004" y="158.5" width="3.2" height="4" fill="#2aa8e0"/><rect x="535.4000000000003" y="158.5" width="3.2" height="4" fill="#e04a9a"/><rect x="539.2000000000003" y="158.5" width="3.2" height="4" fill="#f0e050"/><rect x="543.0000000000002" y="158.5" width="3.2" height="4" fill="#333"/><rect x="546.8000000000002" y="158.5" width="3.2" height="4" fill="#ddd"/><rect x="550.6000000000001" y="158.5" width="3.2" height="4" fill="#777"/><rect x="554.4000000000001" y="158.5" width="3.2" height="4" fill="#e8e8e8"/><rect x="558.2" y="158.5" width="3.2" height="4" fill="#2aa8e0"/><rect x="562.0" y="158.5" width="3.2" height="4" fill="#2aa8e0"/><rect x="565.8" y="158.5" width="3.2" height="4" fill="#e04a9a"/><rect x="569.5999999999999" y="158.5" width="3.2" height="4" fill="#f0e050"/><rect x="573.3999999999999" y="158.5" width="3.2" height="4" fill="#222"/><rect x="577.1999999999998" y="158.5" width="3.2" height="4" fill="#999"/><rect x="580.9999999999998" y="158.5" width="3.2" height="4" fill="#ccc"/><rect x="584.7999999999997" y="158.5" width="3.2" height="4" fill="#2aa8e0"/><rect x="588.5999999999997" y="158.5" width="3.2" height="4" fill="#e04a9a"/><rect x="592.3999999999996" y="158.5" width="3.2" height="4" fill="#f0e050"/><rect x="596.1999999999996" y="158.5" width="3.2" height="4" fill="#333"/><rect x="599.9999999999995" y="158.5" width="3.2" height="4" fill="#ddd"/><rect x="603.7999999999995" y="158.5" width="3.2" height="4" fill="#777"/><rect x="607.5999999999995" y="158.5" width="3.2" height="4" fill="#e8e8e8"/><rect x="611.3999999999994" y="158.5" width="3.2" height="4" fill="#2aa8e0"/><rect x="615.1999999999994" y="158.5" width="3.2" height="4" fill="#2aa8e0"/><rect x="618.9999999999993" y="158.5" width="3.2" height="4" fill="#e04a9a"/><rect x="622.7999999999993" y="158.5" width="3.2" height="4" fill="#f0e050"/><rect x="626.5999999999992" y="158.5" width="3.2" height="4" fill="#222"/><rect x="630.3999999999992" y="158.5" width="3.2" height="4" fill="#999"/><rect x="634.1999999999991" y="158.5" width="3.2" height="4" fill="#ccc"/><rect x="637.9999999999991" y="158.5" width="3.2" height="4" fill="#2aa8e0"/><rect x="641.799999999999" y="158.5" width="3.2" height="4" fill="#e04a9a"/><rect x="645.599999999999" y="158.5" width="3.2" height="4" fill="#f0e050"/><rect x="649.399999999999" y="158.5" width="3.2" height="4" fill="#333"/><rect x="653.1999999999989" y="158.5" width="3.2" height="4" fill="#ddd"/><rect x="656.9999999999989" y="158.5" width="3.2" height="4" fill="#777"/><rect x="660.7999999999988" y="158.5" width="3.2" height="4" fill="#e8e8e8"/><rect x="664.5999999999988" y="158.5" width="3.2" height="4" fill="#2aa8e0"/><rect x="668.3999999999987" y="158.5" width="3.2" height="4" fill="#2aa8e0"/><rect x="672.1999999999987" y="158.5" width="3.2" height="4" fill="#e04a9a"/><rect x="675.9999999999986" y="158.5" width="3.2" height="4" fill="#f0e050"/><rect x="679.7999999999986" y="158.5" width="3.2" height="4" fill="#222"/><rect x="683.5999999999985" y="158.5" width="3.2" height="4" fill="#999"/><rect x="687.3999999999985" y="158.5" width="3.2" height="4" fill="#ccc"/><rect x="691.1999999999985" y="158.5" width="3.2" height="4" fill="#2aa8e0"/><rect x="694.9999999999984" y="158.5" width="3.2" height="4" fill="#e04a9a"/><rect x="698.7999999999984" y="158.5" width="3.2" height="4" fill="#f0e050"/><rect x="702.5999999999983" y="158.5" width="3.2" height="4" fill="#333"/><rect x="706.3999999999983" y="158.5" width="3.2" height="4" fill="#ddd"/><rect x="710.1999999999982" y="158.5" width="3.2" height="4" fill="#777"/><rect x="713.9999999999982" y="158.5" width="3.2" height="4" fill="#e8e8e8"/><rect x="717.7999999999981" y="158.5" width="3.2" height="4" fill="#2aa8e0"/><rect x="721.5999999999981" y="158.5" width="3.2" height="4" fill="#2aa8e0"/><rect x="725.399999999998" y="158.5" width="3.2" height="4" fill="#e04a9a"/><rect x="729.199999999998" y="158.5" width="3.2" height="4" fill="#f0e050"/><rect x="732.999999999998" y="158.5" width="3.2" height="4" fill="#222"/><rect x="736.7999999999979" y="158.5" width="3.2" height="4" fill="#999"/><rect x="740.5999999999979" y="158.5" width="3.2" height="4" fill="#ccc"/><rect x="744.3999999999978" y="158.5" width="3.2" height="4" fill="#2aa8e0"/><rect x="748.1999999999978" y="158.5" width="3.2" height="4" fill="#e04a9a"/><rect x="751.9999999999977" y="158.5" width="3.2" height="4" fill="#f0e050"/><rect x="755.7999999999977" y="158.5" width="3.2" height="4" fill="#333"/><rect x="759.5999999999976" y="158.5" width="3.2" height="4" fill="#ddd"/><rect x="763.3999999999976" y="158.5" width="3.2" height="4" fill="#777"/><rect x="767.1999999999975" y="158.5" width="3.2" height="4" fill="#e8e8e8"/><rect x="770.9999999999975" y="158.5" width="3.2" height="4" fill="#2aa8e0"/><rect x="774.7999999999975" y="158.5" width="3.2" height="4" fill="#2aa8e0"/><rect x="778.5999999999974" y="158.5" width="3.2" height="4" fill="#e04a9a"/><rect x="782.3999999999974" y="158.5" width="3.2" height="4" fill="#f0e050"/><rect x="786.1999999999973" y="158.5" width="3.2" height="4" fill="#222"/><rect x="789.9999999999973" y="158.5" width="3.2" height="4" fill="#999"/><rect x="793.7999999999972" y="158.5" width="3.2" height="4" fill="#ccc"/><rect x="797.5999999999972" y="158.5" width="3.2" height="4" fill="#2aa8e0"/><rect x="801.3999999999971" y="158.5" width="3.2" height="4" fill="#e04a9a"/><rect x="805.1999999999971" y="158.5" width="3.2" height="4" fill="#f0e050"/><rect x="808.999999999997" y="158.5" width="3.2" height="4" fill="#333"/><rect x="812.799999999997" y="158.5" width="3.2" height="4" fill="#ddd"/><rect x="816.599999999997" y="158.5" width="3.2" height="4" fill="#777"/><rect x="820.3999999999969" y="158.5" width="3.2" height="4" fill="#e8e8e8"/><rect x="824.1999999999969" y="158.5" width="3.2" height="4" fill="#2aa8e0"/><rect x="827.9999999999968" y="158.5" width="3.2" height="4" fill="#2aa8e0"/><line x1="295" y1="163.5" x2="830" y2="163.5" stroke="#333" stroke-width="0.6" stroke-dasharray="1 2"/><use href="#card" x="315" y="164"/><use href="#card" x="315" y="245"/><use href="#card" x="315" y="326"/><use href="#card" x="315" y="407"/><use href="#card" x="439" y="181"/><use href="#card" x="439" y="262"/><use href="#card" x="439" y="343"/><use href="#card" x="439" y="424"/><use href="#card" x="562.5" y="164"/><use href="#card" x="562.5" y="245"/><use href="#card" x="562.5" y="326"/><use href="#card" x="562.5" y="407"/><use href="#card" x="686" y="181"/><use href="#card" x="686" y="262"/><use href="#card" x="686" y="343"/><use href="#card" x="686" y="424"/><line x1="315" y1="505.5" x2="830" y2="505.5" stroke="#333" stroke-width="1" stroke-dasharray="1.5 2.5"/><line x1="315" y1="164" x2="315" y2="505" stroke="#333" stroke-width="0.8" stroke-dasharray="1.5 2.5"/><line x1="416" y1="167" x2="416" y2="502" stroke="#666" stroke-width="0.8"/><path d="M413 169 L416 164 L419 169Z M413 500 L416 505 L419 500Z" fill="#666"/><line x1="321" y1="233" x2="805" y2="233" stroke="#666" stroke-width="0.8"/><path d="M323 230 L318 233 L323 236Z M803 230 L808 233 L803 236Z" fill="#666"/><line x1="501" y1="165" x2="501" y2="260" stroke="#222" stroke-width="1.2"/><path d="M498 167 L501 162 L504 167Z M498 258 L501 263 L504 258Z" fill="#222"/><line x1="624.5" y1="165" x2="624.5" y2="241" stroke="#222" stroke-width="1.2"/><path d="M621.5 167 L624.5 162 L627.5 167Z M621.5 239 L624.5 244 L627.5 239Z" fill="#222"/><line x1="501" y1="428" x2="501" y2="502" stroke="#222" stroke-width="1.2"/><path d="M498 430 L501 425 L504 430Z M498 500 L501 505 L504 500Z" fill="#222"/><line x1="624.5" y1="409" x2="624.5" y2="502" stroke="#222" stroke-width="1.2"/><path d="M621.5 411 L624.5 406 L627.5 411Z M621.5 500 L624.5 505 L627.5 500Z" fill="#222"/><line x1="321" y1="378" x2="435" y2="378" stroke="#222" stroke-width="1.2"/><path d="M323 375 L318 378 L323 381Z M433 375 L438 378 L433 381Z" fill="#222"/><line x1="298" y1="369.5" x2="314" y2="369.5" stroke="#222" stroke-width="1.2"/><path d="M300 366.5 L295 369.5 L300 372.5Z M312 366.5 L317 369.5 L312 372.5Z" fill="#222"/><line x1="689" y1="358.5" x2="805" y2="358.5" stroke="#222" stroke-width="1.2"/><path d="M691 355.5 L686 358.5 L691 361.5Z M803 355.5 L808 358.5 L803 361.5Z" fill="#222"/><line x1="811" y1="301" x2="827" y2="301" stroke="#222" stroke-width="1.2"/><path d="M813 298 L808 301 L813 304Z M825 298 L830 301 L825 304Z" fill="#222"/><text x="591" y="158" font-size="10" fill="#444" font-family="Liberation Sans" letter-spacing="2">0.5625</text><text x="393" y="335" font-size="10" fill="#444" font-family="Liberation Sans" letter-spacing="2">24.125</text><text x="290" y="368" font-size="10" fill="#444" font-family="Liberation Sans" letter-spacing="2">1.625</text><text x="734" y="357" font-size="10" fill="#444" font-family="Liberation Sans" letter-spacing="2">8.75</text><text x="812" y="300" font-size="10" fill="#444" font-family="Liberation Sans" letter-spacing="2">.625</text><text x="494" y="505" font-size="10" fill="#444" font-family="Liberation Sans" letter-spacing="2">0.3125</text><rect x="609" y="157" width="6" height="6" fill="#111" transform="rotate(45 612 160)"/><path d="M510 504 L518 504 L516 508 L518 512 L510 512 L512 508Z" fill="#111"/><path d="M296.5 503 L296.5 510 L303 510" fill="none" stroke="#d04040" stroke-width="1.3"/><path d="M800 166 L812 178 M804 166 L814 176 M808 166 L816 174" stroke="#888" stroke-width="0.8"/><path d="M796 504 L808 492 M800 504 L808 496" stroke="#888" stroke-width="0.8"/></g></svg>
<div class="a" style="left:192px;top:100px;width:733px;height:1.5px;background:#aaa89f"></div>
<div class="t" style="left:496px;top:123.93px;font-size:14.5px;color:#222;font-family:'Liberation Sans';transform-origin:0 0;transform:scaleX(1.0482);">Press Run 1 - Front</div>
<div class="t" style="left:194px;top:585.09px;font-size:11px;color:#111;font-family:'Liberation Sans';font-weight:bold;transform-origin:0 0;transform:scaleX(0.9864);">Press Runs List</div>
<svg class="a" style="left:902px;top:566px" width="22" height="10"><path d="M2 8 L5 3 L8 8Z M13 3 L19 3 L16 8Z" fill="#333"/></svg>
<svg class="a" style="left:1110px;top:20px" width="48" height="16" viewBox="1110 20 48 16"><g fill="none" stroke="#a8111b" stroke-width="2"><path d="M1115.2 23.2 V32.8 M1121.4 23.5 L1116 28.2 L1121.6 32.8"/><circle cx="1126.3" cy="28.6" r="3"/><circle cx="1134.3" cy="28.6" r="3"/><path d="M1138.3 23 V32.8"/><circle cx="1142.2" cy="28.6" r="2.9"/><path d="M1141.5 25.6 Q1145.6 24.8 1145.6 28.6 V32.8"/><path d="M1148.4 23 V32.8 M1152.5 25.6 L1149.2 28.8 L1152.7 32.8"/></g></svg>
<div class="a" style="left:951px;top:39px;width:0;height:0;border-left:4px solid transparent;border-right:4px solid transparent;border-top:7px solid #555"></div>
<div class="t" style="left:965.3px;top:37.39px;font-size:11px;color:#111;font-family:'Liberation Sans';font-weight:bold;transform-origin:0 0;transform:scaleX(1.0058);">Step &amp; Repeat Properties</div>
<div class="a" style="left:947px;top:53px;width:206px;height:560px;background:#d8d8d8;border:1px solid #c6c6c6;border-radius:4px"></div>
<div class="t" style="left:961.3px;top:67.08px;font-size:9px;color:#111;font-family:'Liberation Sans';font-weight:bold;transform-origin:0 0;transform:scaleX(0.9015);">Name:</div>
<div class="a" style="left:961px;top:81px;width:175px;height:15px;background:#fff;border:1px solid #a9a9a9;box-shadow:inset 0 1px 1px rgba(0,0,0,.12)"></div>
<div class="t" style="left:965px;top:84.26px;font-size:9.5px;color:#222;font-family:'Liberation Sans';transform-origin:0 0;transform:scaleX(0.9296);">SnR_1</div>
<div class="t" style="left:961.3px;top:102.38px;font-size:9px;color:#111;font-family:'Liberation Sans';font-weight:bold;transform-origin:0 0;transform:scaleX(0.9457);">Step &amp; Repeat Element:</div>
<div class="a" style="left:961px;top:115px;width:175px;height:16px;background:linear-gradient(#f3f3f3,#dedede);border:1px solid #b5b5b5;border-radius:4px;box-shadow:0 1px 0 rgba(255,255,255,.5)"></div>
<svg class="a" style="left:1125px;top:118px" width="6" height="10"><path d="M0.5 4 L3 0.5 L5.5 4Z M0.5 6 L3 9.5 L5.5 6Z" fill="#999"/></svg>
<div class="t" style="left:1034px;top:117.19px;font-size:11px;color:#8a8a8a;font-family:'Liberation Sans';transform-origin:0 0;transform:scaleX(1.0156);">File</div>
<div class="a" style="left:961px;top:138px;width:175px;height:16px;background:linear-gradient(#f3f3f3,#dedede);border:1px solid #b5b5b5;border-radius:4px;box-shadow:0 1px 0 rgba(255,255,255,.5)"></div>
<svg class="a" style="left:1125px;top:141px" width="6" height="10"><path d="M0.5 4 L3 0.5 L5.5 4Z M0.5 6 L3 9.5 L5.5 6Z" fill="#999"/></svg>
<div class="t" style="left:963.5px;top:159.68px;font-size:9px;color:#222;font-family:'Liberation Sans';font-weight:bold;transform-origin:0 0;transform:scaleX(0.9141);">Size:</div>
<div class="t" style="left:989.3px;top:159.68px;font-size:9px;color:#222;font-family:'Liberation Sans';font-weight:bold;transform-origin:0 0;transform:scaleX(0.9568);">Width:</div>
<div class="t" style="left:1024px;top:159.68px;font-size:9px;color:#222;font-family:'Liberation Sans';font-weight:bold;transform-origin:0 0;transform:scaleX(1.0649);">8.5 in</div>
<div class="t" style="left:1064px;top:159.68px;font-size:9px;color:#222;font-family:'Liberation Sans';font-weight:bold;transform-origin:0 0;transform:scaleX(0.9906);">Height:</div>
<div class="t" style="left:1103.5px;top:159.68px;font-size:9px;color:#222;font-family:'Liberation Sans';font-weight:bold;transform-origin:0 0;transform:scaleX(1.0431);">5.5 in</div>
<div class="t" style="left:961.5px;top:176.38px;font-size:9px;color:#111;font-family:'Liberation Sans';font-weight:bold;transform-origin:0 0;transform:scaleX(0.8908);">Repeat:</div>
<div class="t" style="left:963px;top:191.58px;font-size:9px;color:#222;font-family:'Liberation Sans';font-weight:bold;transform-origin:0 0;transform:scaleX(1.0530);">H:</div>
<div class="a" style="left:978px;top:189px;width:56px;height:15px;background:#fff;border:1px solid #a9a9a9;box-shadow:inset 0 1px 1px rgba(0,0,0,.12)"></div>
<div class="t" style="left:982px;top:191.88px;font-size:9px;color:#111;font-family:'Liberation Sans';font-weight:bold;transform-origin:0 0;transform:scaleX(1.1988);">4</div>
<div class="t" style="left:1064px;top:191.58px;font-size:9px;color:#222;font-family:'Liberation Sans';font-weight:bold;transform-origin:0 0;transform:scaleX(1.2348);">V:</div>
<div class="a" style="left:1079px;top:189px;width:56px;height:15px;background:#fff;border:1px solid #a9a9a9;box-shadow:inset 0 1px 1px rgba(0,0,0,.12)"></div>
<div class="t" style="left:1083px;top:191.88px;font-size:9px;color:#111;font-family:'Liberation Sans';font-weight:bold;transform-origin:0 0;transform:scaleX(1.1988);">4</div>
<div class="t" style="left:961.5px;top:208.58px;font-size:9px;color:#111;font-family:'Liberation Sans';font-weight:bold;transform-origin:0 0;transform:scaleX(0.9320);">Arrange Pages:</div>
<div class="a" style="left:961px;top:222px;width:175px;height:17px;background:linear-gradient(#ffffff,#e8e8e8);border:1px solid #8f8f8f;border-radius:4px;box-shadow:0 1px 0 rgba(255,255,255,.5)"></div>
<svg class="a" style="left:1125px;top:225px" width="6" height="10"><path d="M0.5 4 L3 0.5 L5.5 4Z M0.5 6 L3 9.5 L5.5 6Z" fill="#222"/></svg>
<div class="t" style="left:968.5px;top:225.38px;font-size:9px;color:#111;font-family:'Liberation Sans';font-weight:bold;transform-origin:0 0;transform:scaleX(0.8942);">Bleed to bleed</div>
<div class="t" style="left:963px;top:246.88px;font-size:9px;color:#666;font-family:'Liberation Sans';font-weight:bold;transform-origin:0 0;transform:scaleX(1.0530);">H:</div>
<div class="a" style="left:978px;top:244px;width:56px;height:14px;background:#f1f1f1;border:1px solid #a9a9a9;box-shadow:inset 0 1px 1px rgba(0,0,0,.12)"></div>
<div class="t" style="left:981px;top:246.88px;font-size:9px;color:#9a9a9a;font-family:'Liberation Sans';font-weight:bold;transform-origin:0 0;transform:scaleX(1.1066);">0.25 in</div>
<div class="t" style="left:1064px;top:246.88px;font-size:9px;color:#666;font-family:'Liberation Sans';font-weight:bold;transform-origin:0 0;transform:scaleX(1.2348);">V:</div>
<div class="a" style="left:1079px;top:244px;width:56px;height:14px;background:#f1f1f1;border:1px solid #a9a9a9;box-shadow:inset 0 1px 1px rgba(0,0,0,.12)"></div>
<div class="t" style="left:1082px;top:246.88px;font-size:9px;color:#9a9a9a;font-family:'Liberation Sans';font-weight:bold;transform-origin:0 0;transform:scaleX(1.1066);">0.25 in</div>
<div class="t" style="left:961.5px;top:265.58px;font-size:9px;color:#111;font-family:'Liberation Sans';font-weight:bold;transform-origin:0 0;transform:scaleX(0.9555);">Stagger Type:</div>
<div class="a" style="left:961px;top:279px;width:175px;height:17px;background:linear-gradient(#ffffff,#e8e8e8);border:1px solid #8f8f8f;border-radius:4px;box-shadow:0 1px 0 rgba(255,255,255,.5)"></div>
<svg class="a" style="left:1125px;top:282px" width="6" height="10"><path d="M0.5 4 L3 0.5 L5.5 4Z M0.5 6 L3 9.5 L5.5 6Z" fill="#222"/></svg>
<div class="t" style="left:968px;top:281.88px;font-size:9px;color:#111;font-family:'Liberation Sans';font-weight:bold;transform-origin:0 0;transform:scaleX(0.9195);">Castletop – 1st Lane Up</div>
<div class="t" style="left:961.3px;top:301.88px;font-size:9px;color:#111;font-family:'Liberation Sans';font-weight:bold;transform-origin:0 0;transform:scaleX(0.9386);">Stagger Amount:</div>
<div class="a" style="left:963px;top:317.0px;width:12px;height:12px;border-radius:50%;border:1px solid #5a7fa8;background:radial-gradient(circle at 50% 60%,#d8efff,#8cc0ea)"></div>
<div class="a" style="left:966.5px;top:320.5px;width:5px;height:5px;border-radius:50%;background:#111"></div>
<div class="t" style="left:978px;top:318.38px;font-size:9px;color:#111;font-family:'Liberation Sans';font-weight:bold;transform-origin:0 0;transform:scaleX(1.0856);">Default(1/4)</div>
<div class="t" style="left:1091.25px;top:318.38px;font-size:9px;color:#111;font-family:'Liberation Sans';font-weight:bold;transform-origin:0 0;transform:scaleX(0.9843);">1.375 in</div>
<div class="a" style="left:963px;top:333.25px;width:12px;height:12px;border-radius:50%;border:1px solid #8a8a8a;background:linear-gradient(#ffffff,#e4e4e4)"></div>
<div class="t" style="left:978px;top:334.63px;font-size:9px;color:#111;font-family:'Liberation Sans';font-weight:bold;transform-origin:0 0;transform:scaleX(1.1191);">1/4</div>
<div class="t" style="left:1091.25px;top:334.63px;font-size:9px;color:#111;font-family:'Liberation Sans';font-weight:bold;transform-origin:0 0;transform:scaleX(0.9843);">1.375 in</div>
<div class="a" style="left:963px;top:349.5px;width:12px;height:12px;border-radius:50%;border:1px solid #8a8a8a;background:linear-gradient(#ffffff,#e4e4e4)"></div>
<div class="t" style="left:978px;top:350.88px;font-size:9px;color:#111;font-family:'Liberation Sans';font-weight:bold;transform-origin:0 0;transform:scaleX(1.1191);">1/3</div>
<div class="t" style="left:1086.25px;top:350.88px;font-size:9px;color:#111;font-family:'Liberation Sans';font-weight:bold;transform-origin:0 0;transform:scaleX(0.9878);">1.83333 in</div>
<div class="a" style="left:963px;top:365.75px;width:12px;height:12px;border-radius:50%;border:1px solid #8a8a8a;background:linear-gradient(#ffffff,#e4e4e4)"></div>
<div class="t" style="left:978px;top:367.13px;font-size:9px;color:#111;font-family:'Liberation Sans';font-weight:bold;transform-origin:0 0;transform:scaleX(1.1191);">1/2</div>
<div class="t" style="left:1093px;top:367.13px;font-size:9px;color:#111;font-family:'Liberation Sans';font-weight:bold;transform-origin:0 0;transform:scaleX(0.9817);">2.75 in</div>
<div class="a" style="left:963px;top:382.0px;width:12px;height:12px;border-radius:50%;border:1px solid #8a8a8a;background:linear-gradient(#ffffff,#e4e4e4)"></div>
<div class="t" style="left:978px;top:383.38px;font-size:9px;color:#111;font-family:'Liberation Sans';font-weight:bold;transform-origin:0 0;transform:scaleX(0.9911);">Custom</div>
<div class="a" style="left:1079px;top:380px;width:56px;height:14px;background:#fff;border:1px solid #a9a9a9;box-shadow:inset 0 1px 1px rgba(0,0,0,.12)"></div>
<div class="t" style="left:1098.75px;top:383.18px;font-size:9px;color:#111;font-family:'Liberation Sans';font-weight:bold;transform-origin:0 0;transform:scaleX(1.1289);">0 in</div>
<div class="a" style="left:1014px;top:416px;width:71px;height:17px;background:linear-gradient(#ffffff,#e6e6e6);border:1px solid #8d8d8d;border-radius:4px"></div>
<div class="t" style="left:1024.5px;top:418.69px;font-size:11px;color:#111;font-family:'Liberation Sans';font-weight:bold;transform-origin:0 0;transform:scaleX(0.9541);">Save As...</div>
<div class="a" style="left:1164px;top:0px;width:1125px;height:600px;background:#606060"></div>
<div class="a" style="left:1164px;top:0px;width:1125px;height:16px;background:#535353"></div>
<div class="a" style="left:1164px;top:16px;width:1125px;height:1px;background:#474747"></div>
<div class="a" style="left:1164px;top:17px;width:1125px;height:19px;background:#535353"></div>
<div class="a" style="left:1164px;top:35px;width:1125px;height:1px;background:#4a4a4a"></div>
<div class="a" style="left:1164px;top:36px;width:1125px;height:17px;background:#434343"></div>
<div class="a" style="left:1164px;top:36px;width:200px;height:17px;background:#535353"></div>
<div class="a" style="left:1164px;top:53px;width:1125px;height:1px;background:#3e3e3e"></div>
<div class="a" style="left:1164px;top:594px;width:970px;height:6px;background:#535353"></div>
<div class="a" style="left:1164px;top:0px;width:1px;height:600px;background:#3a3a3a"></div>
<div class="a" style="left:1170px;top:3px;width:10px;height:10px;background:#2a1400;border:1px solid #f08a00;border-radius:1px;color:#f39a1a;font-size:7px;font-weight:bold;line-height:8px;text-align:center">Ai</div>
<svg class="a" style="left:1187px;top:3px" width="12" height="11"><path d="M6 0.5 L11.5 5.5 L10 5.5 L10 10.5 L7.5 10.5 L7.5 7.5 L4.5 7.5 L4.5 10.5 L2 10.5 L2 5.5 L0.5 5.5Z" fill="#e4e4e4"/></svg>
<div class="a" style="left:1206px;top:2px;width:1px;height:13px;background:#444"></div>
<div class="t" style="left:1216px;top:3.58px;font-size:9px;color:#e2e2e2;font-family:'Liberation Sans';transform-origin:0 0;transform:scaleX(0.7655);">File</div>
<div class="t" style="left:1235.4px;top:3.58px;font-size:9px;color:#e2e2e2;font-family:'Liberation Sans';transform-origin:0 0;transform:scaleX(0.7609);">Edit</div>
<div class="t" style="left:1255.7px;top:3.58px;font-size:9px;color:#e2e2e2;font-family:'Liberation Sans';transform-origin:0 0;transform:scaleX(0.8035);">Object</div>
<div class="t" style="left:1285.2px;top:3.58px;font-size:9px;color:#e2e2e2;font-family:'Liberation Sans';transform-origin:0 0;transform:scaleX(0.7688);">Type</div>
<div class="t" style="left:1308.1px;top:3.58px;font-size:9px;color:#e2e2e2;font-family:'Liberation Sans';transform-origin:0 0;transform:scaleX(0.7596);">Select</div>
<div class="t" style="left:1335.6px;top:3.58px;font-size:9px;color:#e2e2e2;font-family:'Liberation Sans';transform-origin:0 0;transform:scaleX(0.7748);">Effect</div>
<div class="t" style="left:1361.8px;top:3.58px;font-size:9px;color:#e2e2e2;font-family:'Liberation Sans';transform-origin:0 0;transform:scaleX(0.7806);">View</div>
<div class="t" style="left:1384.8px;top:3.58px;font-size:9px;color:#e2e2e2;font-family:'Liberation Sans';transform-origin:0 0;transform:scaleX(0.8185);">Window</div>
<div class="t" style="left:1418.8px;top:3.58px;font-size:9px;color:#e2e2e2;font-family:'Liberation Sans';transform-origin:0 0;transform:scaleX(0.8158);">Help</div>
<div class="a" style="left:1440px;top:2px;width:1px;height:13px;background:#444"></div>
<svg class="a" style="left:1447px;top:4px" width="24" height="8"><rect x="0" y="0" width="5" height="7" fill="#ddd"/><rect x="6" y="0" width="5" height="3" fill="#ddd"/><rect x="6" y="4" width="5" height="3" fill="#ddd"/><path d="M17 2.5 L19.5 5 L22 2.5" fill="none" stroke="#ddd" stroke-width="1.2"/></svg>
<div class="a" style="left:2084px;top:2px;width:1px;height:13px;background:#4a4a4a"></div>
<div class="t" style="left:2091.5px;top:3.58px;font-size:9px;color:#e2e2e2;font-family:'Liberation Sans';transform-origin:0 0;transform:scaleX(0.7870);">Zoran</div>
<svg class="a" style="left:2115px;top:6px" width="8" height="5"><path d="M1 1 L4 4 L7 1" fill="none" stroke="#ddd" stroke-width="1.2"/></svg>
<div class="a" style="left:2128px;top:2px;width:1px;height:13px;background:#4a4a4a"></div>
<div class="a" style="left:2134px;top:2px;width:99px;height:11px;background:#454545;border-radius:2px"></div>
<svg class="a" style="left:2136px;top:3px" width="12" height="9"><circle cx="6" cy="3.8" r="2.8" fill="none" stroke="#ccc" stroke-width="1"/><line x1="4" y1="6" x2="1" y2="9" stroke="#ccc" stroke-width="1.2"/><path d="M8.5 6.5 L11 6.5 L9.7 8Z" fill="#ccc"/></svg>
<div class="t" style="left:2148.5px;top:3.6px;font-size:8.5px;color:#8a8a8a;font-family:'Liberation Sans';transform-origin:0 0;transform:scaleX(0.7336);">Search Adobe Stock</div>
<div class="a" style="left:2236px;top:0px;width:1px;height:16px;background:#4a4a4a"></div>
<div class="a" style="left:2253px;top:0px;width:1px;height:16px;background:#4a4a4a"></div>
<div class="a" style="left:2270px;top:0px;width:1px;height:16px;background:#4a4a4a"></div>
<svg class="a" style="left:2240px;top:2px" width="49" height="10"><rect x="3" y="5" width="6" height="1.5" fill="#ddd"/><rect x="19.5" y="2.5" width="5" height="5" fill="none" stroke="#ddd" stroke-width="1"/><rect x="21.5" y="0.5" width="5" height="5" fill="none" stroke="#ddd" stroke-width="1"/><path d="M36 1 L41 6 M41 1 L36 6" stroke="#ddd" stroke-width="1.2"/></svg>
<div class="a" style="left:1168px;top:19px;width:1px;height:14px;background:#3e3e3e"></div>
<div class="t" style="left:1172.6px;top:23.23px;font-size:8px;color:#c4c4c4;font-family:'Liberation Sans';transform-origin:0 0;transform:scaleX(0.7143);">No Selection</div>
<div class="a" style="left:1210px;top:19px;width:1px;height:14px;background:#474747"></div>
<div class="a" style="left:1219.5px;top:21px;width:12px;height:11px;background:#fff"></div>
<div class="a" style="left:1233px;top:20px;width:9px;height:13px;background:#4b4b4b"></div>
<svg class="a" style="left:1233px;top:24px" width="8" height="5"><path d="M1 1 L4 4 L7 1" fill="none" stroke="#ddd" stroke-width="1.1"/></svg>
<div class="a" style="left:1245px;top:21px;width:12px;height:11px;background:#fff"></div>
<div class="a" style="left:1259px;top:20px;width:9px;height:13px;background:#4b4b4b"></div>
<svg class="a" style="left:1245px;top:21px" width="12" height="11"><line x1="1" y1="10" x2="11" y2="1" stroke="#e0181b" stroke-width="1.4"/><rect x="5" y="4" width="3" height="3" fill="none" stroke="#555" stroke-width="0.7"/></svg>
<svg class="a" style="left:1259px;top:24px" width="8" height="5"><path d="M1 1 L4 4 L7 1" fill="none" stroke="#ddd" stroke-width="1.1"/></svg>
<div class="t" style="left:1274.6px;top:23.23px;font-size:8px;color:#d4d4d4;font-family:'Liberation Sans';transform-origin:0 0;transform:scaleX(0.7418);">Stroke:</div>
<div class="a" style="left:1274.6px;top:31px;width:18.8px;height:1px;border-top:1px dotted #9a9a9a"></div>
<svg class="a" style="left:1297px;top:21px" width="8" height="11"><path d="M1.5 4 L4 1.5 L6.5 4 M1.5 7 L4 9.5 L6.5 7" fill="none" stroke="#ddd" stroke-width="1"/></svg>
<div class="a" style="left:1308px;top:21px;width:25px;height:11px;background:#454545"></div>
<svg class="a" style="left:1334px;top:24px" width="8" height="5"><path d="M1 1 L4 4 L7 1" fill="none" stroke="#ddd" stroke-width="1.1"/></svg>
<div class="a" style="left:1347px;top:21px;width:53px;height:11px;background:#777777"></div>
<svg class="a" style="left:1402px;top:24px" width="8" height="5"><path d="M1 1 L4 4 L7 1" fill="none" stroke="#666" stroke-width="1.1"/></svg>
<div class="a" style="left:1415px;top:21px;width:50px;height:11px;background:#f0f0f0"></div>
<div class="a" style="left:1418px;top:26px;width:24px;height:1.5px;background:#000"></div>
<div class="t" style="left:1444px;top:23.23px;font-size:8px;color:#222;font-family:'Liberation Sans';transform-origin:0 0;transform:scaleX(0.8179);">Basic</div>
<svg class="a" style="left:1467px;top:24px" width="8" height="5"><path d="M1 1 L4 4 L7 1" fill="none" stroke="#ddd" stroke-width="1.1"/></svg>
<div class="t" style="left:1480px;top:23.23px;font-size:8px;color:#d4d4d4;font-family:'Liberation Sans';transform-origin:0 0;transform:scaleX(0.7498);">Opacity:</div>
<div class="a" style="left:1480px;top:31px;width:22px;height:1px;border-top:1px dotted #9a9a9a"></div>
<div class="a" style="left:1506px;top:21px;width:29px;height:11px;background:#454545"></div>
<div class="t" style="left:1507.5px;top:23.15px;font-size:7.5px;color:#d0d0d0;font-family:'Liberation Sans';transform-origin:0 0;transform:scaleX(0.5735);">100%</div>
<svg class="a" style="left:1537px;top:23px" width="6" height="8"><path d="M1.5 1 L4.5 4 L1.5 7" fill="none" stroke="#ddd" stroke-width="1.1"/></svg>
<div class="t" style="left:1549px;top:23.23px;font-size:8px;color:#b0b0b0;font-family:'Liberation Sans';transform-origin:0 0;transform:scaleX(0.6997);">Style:</div>
<div class="a" style="left:1567px;top:21px;width:11px;height:11px;background:#e8e8e8"></div>
<svg class="a" style="left:1580px;top:24px" width="8" height="5"><path d="M1 1 L4 4 L7 1" fill="none" stroke="#ddd" stroke-width="1.1"/></svg>
<div class="a" style="left:1592px;top:19px;width:1px;height:14px;background:#474747"></div>
<div class="a" style="left:1596px;top:21px;width:55px;height:12px;border:1px solid #6a6a6a;border-radius:2px"></div>
<div class="t" style="left:1602px;top:23.43px;font-size:8px;color:#e4e4e4;font-family:'Liberation Sans';transform-origin:0 0;transform:scaleX(0.7216);">Document Setup</div>
<div class="a" style="left:1654px;top:21px;width:42px;height:12px;border:1px solid #6a6a6a;border-radius:2px"></div>
<div class="t" style="left:1659px;top:23.43px;font-size:8px;color:#e4e4e4;font-family:'Liberation Sans';transform-origin:0 0;transform:scaleX(0.7118);">Preferences</div>
<svg class="a" style="left:1700px;top:20px" width="24" height="12"><path d="M1 4 L5 4 M3 2 L3 6 M6 1 L6 11 L9 8 L11 11 L12 10 L10 7 L13 7Z" fill="#ccc" stroke="#ccc" stroke-width="0.8"/><path d="M17 4 L19.5 6.5 L22 4" fill="none" stroke="#ddd" stroke-width="1.1"/></svg>
<svg class="a" style="left:2227px;top:22px" width="62" height="11"><g fill="#777"><rect x="1" y="1" width="2" height="2"/><rect x="5" y="1" width="2" height="2"/><rect x="1" y="7" width="2" height="2"/><rect x="5" y="7" width="2" height="2"/></g><rect x="16" y="0" width="2" height="10" fill="#ddd"/><path d="M19 3 L22 3 Q24 5 22 7 L19 7" fill="none" stroke="#ddd" stroke-width="1.2"/><path d="M28 4 L30 6 L32 4" fill="none" stroke="#777" stroke-width="1"/><g fill="#ccc"><rect x="48" y="2" width="1.5" height="1.5"/><rect x="50" y="2" width="6" height="1.5"/><rect x="48" y="5" width="1.5" height="1.5"/><rect x="50" y="5" width="6" height="1.5"/><rect x="48" y="8" width="1.5" height="1.5"/><rect x="50" y="8" width="6" height="1.5"/></g></svg>
<div class="t" style="left:1170px;top:41.0px;font-size:8.5px;color:#ececec;font-family:'Liberation Sans';font-weight:bold;transform-origin:0 0;transform:scaleX(0.7428);">product_A60.20.00.03_4_2.5_7.pdf @ 74.3% (RGB/Preview)</div>
<svg class="a" style="left:1354px;top:41px" width="7" height="7"><path d="M1 1 L6 6 M6 1 L1 6" stroke="#e0e0e0" stroke-width="1.3"/></svg>
<svg class="a" style="left:0;top:0" width="2289" height="600" viewBox="0 0 2289 600"><rect x="1420.5" y="58.5" width="603" height="535.5" fill="#fff" stroke="#7a8ee8" stroke-width="1"/><path d="M1449 210 L1463 205.5 L1463 497.5 L1449 483Z" fill="#c4c4c6"/><path d="M1449 213.5 L1444.5 215 L1444.5 472 L1449.5 478" fill="none" stroke="#4a4ab0" stroke-width="0.9"/><path d="M1656 503.6 L1700.7 503.6 L1700.7 521 L1679 543 L1656 521Z" fill="#c4c4c6"/><path d="M1921 503.6 L1965.8 503.6 L1965.8 521 L1943.4 543 L1921 521Z" fill="#c4c4c6"/><g stroke="#f4485c" stroke-width="1" fill="none"><line x1="1466" y1="208.5" x2="2001" y2="208.5"/><line x1="1466" y1="495.5" x2="2001" y2="495.5"/><line x1="1468.5" y1="208" x2="1468.5" y2="495.5"/><line x1="1631.5" y1="208" x2="1631.5" y2="495.5"/><line x1="1734.5" y1="208" x2="1734.5" y2="495.5"/><line x1="1897.5" y1="208" x2="1897.5" y2="495.5"/><line x1="1746" y1="108.5" x2="1886" y2="108.5"/><line x1="1578.6" y1="548.7" x2="1631" y2="496.5"/><line x1="1846.6" y1="548.7" x2="1897" y2="496.5"/></g><g stroke="#4848c0" stroke-width="1" fill="none"><line x1="1734.5" y1="108" x2="1734.5" y2="208"/><line x1="1897" y1="108" x2="1897" y2="208"/><path d="M1734.5 108.5 L1746.5 108.5 L1746.5 111 M1885.5 111 L1885.5 108.5 L1897 108.5"/><line x1="1580" y1="547.5" x2="1606" y2="521.5" stroke-width="1.1"/><line x1="1848" y1="547.5" x2="1873" y2="522" stroke-width="1.1"/></g><clipPath id="dieclip"><path d="M1465.5 495.5 L1465.5 210 L1468.5 206.5 L1631.5 206.5 L1631.5 200 L1635.5 195.5 L1646.5 160.5 L1649 158 L1732.5 158 L1732.5 106 C1732.5 93 1738 84 1749 80.5 L1881 80.5 C1892 84 1899 93 1899 106 L1899 158 L1986 158 L1988.5 160.5 L1997 196 L2001 200 L2001 495.5 L1948.2 548.7 L1912.6 548.7 L1897 497 L1892.5 501 L1895.3 521 L1895.3 571 L1868.6 571 L1846.6 548.7 L1816.5 548.7 L1816.5 552 L1797 571 L1737 571 L1734 496.5 L1683 548.7 L1646.4 548.7 L1631 497 L1627.5 501 L1630 521 L1630 571 L1602.4 571 L1578.6 548.7 L1551 548.7 L1551 552 L1532.7 571 L1471 571 Z"/></clipPath><path d="M1465.5 495.5 L1465.5 210 L1468.5 206.5 L1631.5 206.5 L1631.5 200 L1635.5 195.5 L1646.5 160.5 L1649 158 L1732.5 158 L1732.5 106 C1732.5 93 1738 84 1749 80.5 L1881 80.5 C1892 84 1899 93 1899 106 L1899 158 L1986 158 L1988.5 160.5 L1997 196 L2001 200 L2001 495.5 L1948.2 548.7 L1912.6 548.7 L1897 497 L1892.5 501 L1895.3 521 L1895.3 571 L1868.6 571 L1846.6 548.7 L1816.5 548.7 L1816.5 552 L1797 571 L1737 571 L1734 496.5 L1683 548.7 L1646.4 548.7 L1631 497 L1627.5 501 L1630 521 L1630 571 L1602.4 571 L1578.6 548.7 L1551 548.7 L1551 552 L1532.7 571 L1471 571 Z" fill="none" stroke="#4646b4" stroke-width="6" stroke-linejoin="miter" stroke-miterlimit="3" clip-path="url(#dieclip)"/><path d="M1465.5 495.5 L1465.5 210 L1468.5 206.5 L1631.5 206.5 L1631.5 200 L1635.5 195.5 L1646.5 160.5 L1649 158 L1732.5 158 L1732.5 106 C1732.5 93 1738 84 1749 80.5 L1881 80.5 C1892 84 1899 93 1899 106 L1899 158 L1986 158 L1988.5 160.5 L1997 196 L2001 200 L2001 495.5 L1948.2 548.7 L1912.6 548.7 L1897 497 L1892.5 501 L1895.3 521 L1895.3 571 L1868.6 571 L1846.6 548.7 L1816.5 548.7 L1816.5 552 L1797 571 L1737 571 L1734 496.5 L1683 548.7 L1646.4 548.7 L1631 497 L1627.5 501 L1630 521 L1630 571 L1602.4 571 L1578.6 548.7 L1551 548.7 L1551 552 L1532.7 571 L1471 571 Z" fill="none" stroke="#8a8500" stroke-width="4.2" stroke-linejoin="miter" stroke-miterlimit="3"/><path d="M1465.5 495.5 L1465.5 210 L1468.5 206.5 L1631.5 206.5 L1631.5 200 L1635.5 195.5 L1646.5 160.5 L1649 158 L1732.5 158 L1732.5 106 C1732.5 93 1738 84 1749 80.5 L1881 80.5 C1892 84 1899 93 1899 106 L1899 158 L1986 158 L1988.5 160.5 L1997 196 L2001 200 L2001 495.5 L1948.2 548.7 L1912.6 548.7 L1897 497 L1892.5 501 L1895.3 521 L1895.3 571 L1868.6 571 L1846.6 548.7 L1816.5 548.7 L1816.5 552 L1797 571 L1737 571 L1734 496.5 L1683 548.7 L1646.4 548.7 L1631 497 L1627.5 501 L1630 521 L1630 571 L1602.4 571 L1578.6 548.7 L1551 548.7 L1551 552 L1532.7 571 L1471 571 Z" fill="none" stroke="#4a4aa8" stroke-width="0.7" stroke-linejoin="round" transform="translate(1.6,1.6)" opacity="0.0"/></svg>
<div class="t" style="left:1740px;top:163.03px;font-size:16.5px;color:#8a8ed8;font-family:'Liberation Sans';transform-origin:0 0;transform:scaleX(1.0658);">Trim</div>
<div class="t" style="left:1740px;top:184.63px;font-size:16.5px;color:#8a8ed8;font-family:'Liberation Sans';transform-origin:0 0;transform:scaleX(0.9888);">Lines</div>
<div class="t" style="left:1908.75px;top:112.88px;font-size:15.5px;color:#8d8a10;font-family:'Liberation Sans';transform-origin:0 0;transform:scaleX(1.0406);">Bleed</div>
<div class="t" style="left:1908.75px;top:134.88px;font-size:15.5px;color:#8d8a10;font-family:'Liberation Sans';transform-origin:0 0;transform:scaleX(1.0156);">Area</div>
<div class="t" style="left:1748px;top:322.03px;font-size:16.5px;color:#e04458;font-family:'Liberation Sans';transform-origin:0 0;transform:scaleX(0.9846);">Fold</div>
<div class="t" style="left:1748px;top:343.63px;font-size:16.5px;color:#e04458;font-family:'Liberation Sans';transform-origin:0 0;transform:scaleX(0.9812);">Lines</div>
<div class="t" style="left:1478.5px;top:447.43px;font-size:16.5px;color:#a6a6a6;font-family:'Liberation Sans';transform-origin:0 0;transform:scaleX(1.0043);">Glue</div>
<div class="t" style="left:1478.5px;top:468.73px;font-size:16.5px;color:#a6a6a6;font-family:'Liberation Sans';transform-origin:0 0;transform:scaleX(0.9756);">Area</div>
<div class="t" style="left:1444.7px;top:585.18px;font-size:9px;color:#1a1a1a;font-family:'Liberation Sans';transform-origin:0 0;transform:scaleX(0.9384);">Length=4in Width=2.5in Depth=7in</div>
<div class="a" style="left:1177px;top:82px;width:43px;height:200px;background:#535353;border:1px solid #3c3c3c"></div>
<div class="a" style="left:1177px;top:82px;width:43px;height:8px;background:#454545"></div>
<svg class="a" style="left:1200px;top:83px" width="22" height="8"><path d="M5 1.5 L2.5 4 L5 6.5Z M8 1.5 L5.5 4 L8 6.5Z" fill="#d0d0d0" stroke="#d0d0d0" stroke-width="0.6"/><path d="M14.5 2 L18.5 6 M18.5 2 L14.5 6" stroke="#e0e0e0" stroke-width="1.3"/></svg>
<div class="a" style="left:1192px;top:92px;width:13px;height:1.5px;background:#6a6a6a"></div>
<svg class="a" style="left:1177px;top:82px" width="43" height="200" viewBox="1177 82 43 200"><path d="M1186.5 102.5 L1195 109.5 L1190.8 110 L1188.5 114 Z" fill="none" stroke="#d8d8d8" stroke-width="1" stroke-linejoin="round"/><path d="M1204.5 102.5 L1213 109.5 L1208.8 110 L1206.5 114 Z" fill="#e0e0e0" stroke="#e0e0e0" stroke-width="0.8" stroke-linejoin="round"/><path d="M1186 129 L1187.5 123.5 L1191 120 L1194.5 123.5 L1191 127 Z" fill="#d8d8d8"/><path d="M1191.5 119.5 L1193 118 L1196 121 L1194.5 122.5Z" fill="#d8d8d8"/><circle cx="1189.5" cy="125.5" r="0.9" fill="#535353"/><path d="M1204 129 L1205.5 123.5 L1209 120 L1212.5 123.5 L1209 127 Z" fill="none" stroke="#d8d8d8" stroke-width="0.9"/><path d="M1209.5 119.5 L1211 118 L1214 121 L1212.5 122.5Z" fill="#d8d8d8"/><path d="M1203 127 Q1202 122 1205 120" fill="none" stroke="#d8d8d8" stroke-width="0.8"/><rect x="1185.5" y="132.5" width="10" height="9" fill="#6a6a6a" stroke="#d8d8d8" stroke-width="1"/><path d="M1204 143 Q1203.5 139 1206.5 138.5 L1212.5 131.5 L1214 133 L1208 139.5 Q1208 142.5 1204 143Z" fill="#e0e0e0"/><text x="1185" y="156.5" font-family="Liberation Serif" font-size="13" fill="#e0e0e0">T</text><path d="M1205.5 146.5 A5 5 0 1 1 1203.5 150.5" fill="none" stroke="#d8d8d8" stroke-width="1"/><path d="M1203 145 L1206.5 146.5 L1204 149.5" fill="none" stroke="#d8d8d8" stroke-width="1"/><path d="M1185 166 L1191.5 159.5 L1195.5 163.5 L1189 170 Z" fill="#d8d8d8"/><path d="M1185 166 L1188 163 L1192 167 L1189 170Z" fill="#9a9a9a"/><path d="M1203.5 163 Q1203 159 1208 159 Q1213 159 1212.5 162.5 Q1212 165.5 1207.5 165.5 Q1204 165.5 1203.5 163Z" fill="none" stroke="#d8d8d8" stroke-width="0.9"/><path d="M1208.5 162 L1208.5 169.5 L1210.5 167.5 L1213.5 168Z" fill="#e0e0e0"/><defs><linearGradient id="gr1"><stop offset="0" stop-color="#222"/><stop offset="1" stop-color="#eee"/></linearGradient></defs><rect x="1185.5" y="174.5" width="10" height="9" fill="url(#gr1)" stroke="#d8d8d8" stroke-width="1"/><path d="M1203.5 184.5 L1204 182 L1210 176 L1212 178 L1206 184Z" fill="none" stroke="#d8d8d8" stroke-width="0.9"/><path d="M1210 174 L1212 172 L1214.5 174.5 L1212.5 176.5Z" fill="#e0e0e0"/><path d="M1185 197 Q1187 190 1190 194 Q1192 197 1195 191" fill="none" stroke="#d8d8d8" stroke-width="1"/><path d="M1186 192 L1189 188 L1191 190" fill="none" stroke="#d8d8d8" stroke-width="0.9"/><rect x="1203.5" y="188.5" width="5.5" height="5.5" fill="none" stroke="#d8d8d8" stroke-width="0.9"/><circle cx="1211" cy="195" r="3" fill="none" stroke="#d8d8d8" stroke-width="0.9"/><path d="M1187.5 200 L1187.5 210.5 L1197 210.5 M1185 203.5 L1194.5 203.5 L1194.5 213" fill="none" stroke="#d8d8d8" stroke-width="1"/><circle cx="1207" cy="204" r="4" fill="none" stroke="#d8d8d8" stroke-width="1"/><line x1="1210" y1="207" x2="1213.5" y2="210.5" stroke="#ddd" stroke-width="1.6"/><rect x="1195" y="115" width="1.5" height="1.5" fill="#bbb"/><rect x="1213" y="115" width="1.5" height="1.5" fill="#bbb"/><rect x="1195" y="129" width="1.5" height="1.5" fill="#bbb"/><rect x="1213" y="129" width="1.5" height="1.5" fill="#bbb"/><rect x="1195" y="143" width="1.5" height="1.5" fill="#bbb"/><rect x="1213" y="143" width="1.5" height="1.5" fill="#bbb"/><rect x="1195" y="157" width="1.5" height="1.5" fill="#bbb"/><rect x="1213" y="157" width="1.5" height="1.5" fill="#bbb"/><rect x="1195" y="171" width="1.5" height="1.5" fill="#bbb"/><rect x="1213" y="171" width="1.5" height="1.5" fill="#bbb"/><rect x="1195" y="185" width="1.5" height="1.5" fill="#bbb"/><rect x="1195" y="199" width="1.5" height="1.5" fill="#bbb"/><rect x="1213" y="213" width="1.5" height="1.5" fill="#bbb"/><rect x="1192.5" y="228.5" width="20" height="20" fill="#fff" stroke="#888" stroke-width="0.8"/><rect x="1196.5" y="232.5" width="12" height="12" fill="#535353"/><line x1="1192.5" y1="248.5" x2="1212.5" y2="228.5" stroke="#e01818" stroke-width="1.6"/><rect x="1181" y="218" width="20" height="20" fill="#fff" stroke="#888" stroke-width="0.6"/><path d="M1205 223 Q1210 223 1210 227 M1207 221 L1205 223 L1207 225 M1208 225 L1210 227 L1212 225" fill="none" stroke="#d8d8d8" stroke-width="1"/><rect x="1182.5" y="241.5" width="5" height="5" fill="#fff" stroke="#bbb" stroke-width="0.6"/><rect x="1184.5" y="243.5" width="5" height="5" fill="#333" stroke="#ccc" stroke-width="0.6"/><rect x="1181.5" y="251.5" width="11" height="11" fill="#3c3c3c"/><circle cx="1186" cy="256" r="2.5" fill="none" stroke="#ddd" stroke-width="0.9"/><circle cx="1188" cy="258" r="2.5" fill="#ddd"/><circle cx="1197" cy="256" r="2.5" fill="none" stroke="#ccc" stroke-width="0.9"/><circle cx="1199" cy="258" r="2.5" fill="none" stroke="#ccc" stroke-width="0.9"/><circle cx="1210" cy="257" r="3" fill="none" stroke="#777" stroke-width="0.9"/><g fill="#ddd"><circle cx="1194.5" cy="274.5" r="0.9"/><circle cx="1198" cy="274.5" r="0.9"/><circle cx="1201.5" cy="274.5" r="0.9"/></g></svg>
<div class="a" style="left:1177px;top:299px;width:137px;height:162px;background:#535353;border:1px solid #3c3c3c"></div>
<div class="a" style="left:1177px;top:299px;width:137px;height:8px;background:#454545"></div>
<svg class="a" style="left:1292px;top:300px" width="22" height="8"><path d="M5 1.5 L2.5 4 L5 6.5Z M8 1.5 L5.5 4 L8 6.5Z" fill="#d0d0d0" stroke="#d0d0d0" stroke-width="0.6"/><path d="M14.5 2 L18.5 6 M18.5 2 L14.5 6" stroke="#e0e0e0" stroke-width="1.3"/></svg>
<div class="a" style="left:1178px;top:307px;width:135px;height:15px;background:#484848"></div>
<div class="a" style="left:1178px;top:307px;width:44px;height:15px;background:#535353"></div>
<div class="t" style="left:1184.5px;top:310.95px;font-size:7.5px;color:#e0e0e0;font-family:'Liberation Sans';font-weight:bold;transform-origin:0 0;transform:scaleX(0.9282);">Character</div>
<div class="t" style="left:1224px;top:310.95px;font-size:7.5px;color:#a8a8a8;font-family:'Liberation Sans';transform-origin:0 0;transform:scaleX(0.7710);">Paragraph</div>
<svg class="a" style="left:1179px;top:311px" width="5" height="8"><path d="M1 3 L2.5 1 L4 3 M1 5 L2.5 7 L4 5" fill="none" stroke="#ccc" stroke-width="0.8"/></svg>
<svg class="a" style="left:1302px;top:311px" width="9" height="8"><g fill="#aaa"><rect x="0" y="0.5" width="9" height="1.2"/><rect x="0" y="3.4" width="9" height="1.2"/><rect x="0" y="6.3" width="9" height="1.2"/></g></svg>
<div class="a" style="left:1181px;top:328px;width:129px;height:10px;background:#454545"></div>
<svg class="a" style="left:1300px;top:331.0px" width="8" height="5"><path d="M1 1 L4.0 4 L7 1" fill="none" stroke="#ddd" stroke-width="1.1"/></svg>
<svg class="a" style="left:1183px;top:329px" width="10" height="8"><circle cx="4" cy="3.3" r="2.5" fill="none" stroke="#ccc" stroke-width="0.9"/><line x1="2.3" y1="5.2" x2="0.5" y2="7.5" stroke="#ccc"/><path d="M7 5.5 L9.5 5.5 L8.2 7Z" fill="#ccc"/></svg>
<div class="t" style="left:1197px;top:329.65px;font-size:7.5px;color:#e8e8e8;font-family:'Liberation Sans';font-weight:bold;transform-origin:0 0;transform:scaleX(0.6966);">Myriad Pro</div>
<div class="a" style="left:1181px;top:343px;width:129px;height:10px;background:#454545"></div>
<svg class="a" style="left:1300px;top:346.0px" width="8" height="5"><path d="M1 1 L4.0 4 L7 1" fill="none" stroke="#ddd" stroke-width="1.1"/></svg>
<div class="t" style="left:1184px;top:344.65px;font-size:7.5px;color:#e8e8e8;font-family:'Liberation Sans';font-weight:bold;transform-origin:0 0;transform:scaleX(0.6805);">Regular</div>
<svg class="a" style="left:1181px;top:361.8px" width="12" height="12"><text x="0" y="10" font-family="Liberation Serif" font-size="7" fill="#ccc">T</text><text x="3" y="10" font-family="Liberation Serif" font-size="12" fill="#ccc">T</text></svg>
<div class="a" style="left:1194.3px;top:362.1px;width:8.7px;height:10.5px;background:#474747"></div>
<svg class="a" style="left:1195.3px;top:362.3px" width="7" height="10"><path d="M1 3.5 L3.5 1 L6 3.5 M1 6.5 L3.5 9 L6 6.5" fill="none" stroke="#ccc" stroke-width="0.9"/></svg>
<div class="a" style="left:1204.8px;top:362.1px;width:25px;height:10.5px;background:#474747"></div>
<div class="t" style="left:1206.3px;top:363.87px;font-size:7px;color:#dcdcdc;font-family:'Liberation Sans';transform-origin:0 0;transform:scaleX(1.0000);">12 pt</div>
<div class="a" style="left:1231px;top:362.1px;width:9.5px;height:10.5px;background:#474747"></div>
<svg class="a" style="left:1232px;top:365.3px" width="8" height="5"><path d="M1 1 L4.0 4 L7 1" fill="none" stroke="#ddd" stroke-width="1.1"/></svg>
<svg class="a" style="left:1250px;top:361.8px" width="12" height="12"><path d="M6 1 L3 6 L9 6Z M6 5 L3 10 L9 10Z" fill="none" stroke="#ccc" stroke-width="0.9"/><path d="M1 5 L1 10" stroke="#ccc"/></svg>
<div class="a" style="left:1262.5px;top:362.1px;width:8.7px;height:10.5px;background:#474747"></div>
<svg class="a" style="left:1263.5px;top:362.3px" width="7" height="10"><path d="M1 3.5 L3.5 1 L6 3.5 M1 6.5 L3.5 9 L6 6.5" fill="none" stroke="#ccc" stroke-width="0.9"/></svg>
<div class="a" style="left:1273px;top:362.1px;width:25px;height:10.5px;background:#474747"></div>
<div class="t" style="left:1274.5px;top:363.87px;font-size:7px;color:#dcdcdc;font-family:'Liberation Sans';transform-origin:0 0;transform:scaleX(0.8824);">(14.4 pt)</div>
<div class="a" style="left:1300px;top:362.1px;width:9.5px;height:10.5px;background:#474747"></div>
<svg class="a" style="left:1301px;top:365.3px" width="8" height="5"><path d="M1 1 L4.0 4 L7 1" fill="none" stroke="#ddd" stroke-width="1.1"/></svg>
<svg class="a" style="left:1181px;top:376.7px" width="12" height="12"><text x="0" y="8" font-family="Liberation Sans" font-size="8" fill="#ccc" letter-spacing="-1">VA</text><path d="M4 10 L9 10" stroke="#ccc"/></svg>
<div class="a" style="left:1194.3px;top:377.0px;width:8.7px;height:10.5px;background:#474747"></div>
<svg class="a" style="left:1195.3px;top:377.2px" width="7" height="10"><path d="M1 3.5 L3.5 1 L6 3.5 M1 6.5 L3.5 9 L6 6.5" fill="none" stroke="#ccc" stroke-width="0.9"/></svg>
<div class="a" style="left:1204.8px;top:377.0px;width:25px;height:10.5px;background:#474747"></div>
<div class="t" style="left:1206.3px;top:378.77px;font-size:7px;color:#dcdcdc;font-family:'Liberation Sans';transform-origin:0 0;transform:scaleX(1.0000);">0</div>
<div class="a" style="left:1231px;top:377.0px;width:9.5px;height:10.5px;background:#474747"></div>
<svg class="a" style="left:1232px;top:380.2px" width="8" height="5"><path d="M1 1 L4.0 4 L7 1" fill="none" stroke="#ddd" stroke-width="1.1"/></svg>
<svg class="a" style="left:1250px;top:376.7px" width="12" height="12"><rect x="0" y="0" width="11" height="7" fill="#ccc"/><text x="1" y="6" font-family="Liberation Sans" font-size="6.5" font-weight="bold" fill="#535353" letter-spacing="-0.8">VA</text><path d="M1 9.5 L10 9.5" stroke="#ccc"/></svg>
<div class="a" style="left:1262.5px;top:377.0px;width:8.7px;height:10.5px;background:#474747"></div>
<svg class="a" style="left:1263.5px;top:377.2px" width="7" height="10"><path d="M1 3.5 L3.5 1 L6 3.5 M1 6.5 L3.5 9 L6 6.5" fill="none" stroke="#ccc" stroke-width="0.9"/></svg>
<div class="a" style="left:1273px;top:377.0px;width:25px;height:10.5px;background:#474747"></div>
<div class="t" style="left:1274.5px;top:378.77px;font-size:7px;color:#dcdcdc;font-family:'Liberation Sans';transform-origin:0 0;transform:scaleX(1.0000);">0</div>
<div class="a" style="left:1300px;top:377.0px;width:9.5px;height:10.5px;background:#474747"></div>
<svg class="a" style="left:1301px;top:380.2px" width="8" height="5"><path d="M1 1 L4.0 4 L7 1" fill="none" stroke="#ddd" stroke-width="1.1"/></svg>
<svg class="a" style="left:1181px;top:396.5px" width="12" height="12"><path d="M1 1 L1 10" stroke="#ccc"/><text x="2.5" y="10" font-family="Liberation Serif" font-size="12" fill="#ccc">T</text></svg>
<div class="a" style="left:1194.3px;top:396.8px;width:8.7px;height:10.5px;background:#474747"></div>
<svg class="a" style="left:1195.3px;top:397px" width="7" height="10"><path d="M1 3.5 L3.5 1 L6 3.5 M1 6.5 L3.5 9 L6 6.5" fill="none" stroke="#ccc" stroke-width="0.9"/></svg>
<div class="a" style="left:1204.8px;top:396.8px;width:25px;height:10.5px;background:#474747"></div>
<div class="t" style="left:1206.3px;top:398.57px;font-size:7px;color:#dcdcdc;font-family:'Liberation Sans';transform-origin:0 0;transform:scaleX(1.0000);">100%</div>
<div class="a" style="left:1231px;top:396.8px;width:9.5px;height:10.5px;background:#474747"></div>
<svg class="a" style="left:1232px;top:400px" width="8" height="5"><path d="M1 1 L4.0 4 L7 1" fill="none" stroke="#ddd" stroke-width="1.1"/></svg>
<svg class="a" style="left:1250px;top:396.5px" width="12" height="12"><text x="1" y="8" font-family="Liberation Serif" font-size="11" fill="#ccc">T</text><path d="M0.5 10 L10.5 10" stroke="#ccc"/></svg>
<div class="a" style="left:1262.5px;top:396.8px;width:8.7px;height:10.5px;background:#474747"></div>
<svg class="a" style="left:1263.5px;top:397px" width="7" height="10"><path d="M1 3.5 L3.5 1 L6 3.5 M1 6.5 L3.5 9 L6 6.5" fill="none" stroke="#ccc" stroke-width="0.9"/></svg>
<div class="a" style="left:1273px;top:396.8px;width:25px;height:10.5px;background:#474747"></div>
<div class="t" style="left:1274.5px;top:398.57px;font-size:7px;color:#dcdcdc;font-family:'Liberation Sans';transform-origin:0 0;transform:scaleX(1.0000);">100%</div>
<div class="a" style="left:1300px;top:396.8px;width:9.5px;height:10.5px;background:#474747"></div>
<svg class="a" style="left:1301px;top:400px" width="8" height="5"><path d="M1 1 L4.0 4 L7 1" fill="none" stroke="#ddd" stroke-width="1.1"/></svg>
<svg class="a" style="left:1181px;top:411.8px" width="12" height="12"><text x="0" y="9" font-family="Liberation Sans" font-size="9" fill="#ccc">A</text><path d="M8 2 L8 10" stroke="#ccc"/></svg>
<div class="a" style="left:1194.3px;top:412.1px;width:8.7px;height:10.5px;background:#474747"></div>
<svg class="a" style="left:1195.3px;top:412.3px" width="7" height="10"><path d="M1 3.5 L3.5 1 L6 3.5 M1 6.5 L3.5 9 L6 6.5" fill="none" stroke="#ccc" stroke-width="0.9"/></svg>
<div class="a" style="left:1204.8px;top:412.1px;width:25px;height:10.5px;background:#474747"></div>
<div class="t" style="left:1206.3px;top:413.87px;font-size:7px;color:#dcdcdc;font-family:'Liberation Sans';transform-origin:0 0;transform:scaleX(1.0000);">0 pt</div>
<div class="a" style="left:1231px;top:412.1px;width:9.5px;height:10.5px;background:#474747"></div>
<svg class="a" style="left:1232px;top:415.3px" width="8" height="5"><path d="M1 1 L4.0 4 L7 1" fill="none" stroke="#ddd" stroke-width="1.1"/></svg>
<svg class="a" style="left:1250px;top:411.8px" width="12" height="12"><circle cx="5.5" cy="5.5" r="4.8" fill="none" stroke="#ccc" stroke-width="0.9"/><text x="2.8" y="8.8" font-family="Liberation Serif" font-size="8" fill="#ccc">T</text></svg>
<div class="a" style="left:1262.5px;top:412.1px;width:8.7px;height:10.5px;background:#474747"></div>
<svg class="a" style="left:1263.5px;top:412.3px" width="7" height="10"><path d="M1 3.5 L3.5 1 L6 3.5 M1 6.5 L3.5 9 L6 6.5" fill="none" stroke="#ccc" stroke-width="0.9"/></svg>
<div class="a" style="left:1273px;top:412.1px;width:25px;height:10.5px;background:#474747"></div>
<div class="t" style="left:1274.5px;top:413.87px;font-size:7px;color:#dcdcdc;font-family:'Liberation Sans';transform-origin:0 0;transform:scaleX(1.0000);">0°</div>
<div class="a" style="left:1300px;top:412.1px;width:9.5px;height:10.5px;background:#474747"></div>
<svg class="a" style="left:1301px;top:415.3px" width="8" height="5"><path d="M1 1 L4.0 4 L7 1" fill="none" stroke="#ddd" stroke-width="1.1"/></svg>
<div class="a" style="left:1179px;top:392px;width:133px;height:1px;background:#474747"></div>
<svg class="a" style="left:1178px;top:427px" width="135" height="14"><g font-family="Liberation Serif" font-weight="bold" fill="#d0d0d0"><text x="5" y="11.5" font-size="10.5" textLength="11" lengthAdjust="spacingAndGlyphs">TT</text><text x="24" y="11.5" font-size="10.5">T</text><text x="30" y="11.5" font-size="8">r</text><text x="55" y="11.5" font-size="10.5">T</text><text x="62" y="6" font-size="5">1</text><text x="72" y="11.5" font-size="10.5">T</text><text x="79" y="12" font-size="5">1</text><text x="105" y="10.5" font-size="10.5">T</text><path d="M104 12.5 L113 12.5" stroke="#d0d0d0" stroke-width="1"/><text x="122" y="11.5" font-size="10.5">T</text><path d="M120.5 7 L130 7" stroke="#d0d0d0" stroke-width="1"/></g></svg>
<div class="a" style="left:1181px;top:447px;width:58px;height:11px;background:#454545"></div>
<svg class="a" style="left:1229px;top:450.5px" width="8" height="5"><path d="M1 1 L4.0 4 L7 1" fill="none" stroke="#ddd" stroke-width="1.1"/></svg>
<div class="t" style="left:1184px;top:449.15px;font-size:7.5px;color:#e8e8e8;font-family:'Liberation Sans';font-weight:bold;transform-origin:0 0;transform:scaleX(0.6105);">English: USA</div>
<div class="t" style="left:1250px;top:448.23px;font-size:8px;color:#ccc;font-family:'Liberation Sans';">ª</div>
<div class="t" style="left:1254px;top:447.88px;font-size:9px;color:#ccc;font-family:'Liberation Sans';">a</div>
<div class="a" style="left:1263px;top:447px;width:47px;height:11px;background:#454545"></div>
<svg class="a" style="left:1300px;top:450.5px" width="8" height="5"><path d="M1 1 L4.0 4 L7 1" fill="none" stroke="#ddd" stroke-width="1.1"/></svg>
<div class="t" style="left:1266px;top:449.15px;font-size:7.5px;color:#e8e8e8;font-family:'Liberation Sans';font-weight:bold;transform-origin:0 0;transform:scaleX(0.7057);">Sharp</div>
<div class="a" style="left:1177px;top:461px;width:137px;height:51px;background:#535353;border:1px solid #3c3c3c"></div>
<div class="a" style="left:1177px;top:461px;width:137px;height:7px;background:#454545"></div>
<svg class="a" style="left:1292px;top:461px" width="22" height="8"><path d="M5 1.5 L2.5 4 L5 6.5Z M8 1.5 L5.5 4 L8 6.5Z" fill="#d0d0d0" stroke="#d0d0d0" stroke-width="0.6"/><path d="M14.5 2 L18.5 6 M18.5 2 L14.5 6" stroke="#e0e0e0" stroke-width="1.3"/></svg>
<div class="a" style="left:1178px;top:468px;width:135px;height:16px;background:#484848"></div>
<div class="a" style="left:1178px;top:468px;width:43px;height:16px;background:#535353"></div>
<div class="t" style="left:1184.5px;top:472.45px;font-size:7.5px;color:#e0e0e0;font-family:'Liberation Sans';font-weight:bold;transform-origin:0 0;transform:scaleX(0.9177);">Attributes</div>
<svg class="a" style="left:1179px;top:472px" width="5" height="8"><path d="M1 3 L2.5 1 L4 3 M1 5 L2.5 7 L4 5" fill="none" stroke="#ccc" stroke-width="0.8"/></svg>
<svg class="a" style="left:1302px;top:473px" width="9" height="8"><g fill="#aaa"><rect x="0" y="0.5" width="9" height="1.2"/><rect x="0" y="3.4" width="9" height="1.2"/><rect x="0" y="6.3" width="9" height="1.2"/></g></svg>
<div class="a" style="left:1182px;top:489px;width:7px;height:7px;border:1px solid #bbb"></div>
<div class="t" style="left:1192px;top:489.65px;font-size:7.5px;color:#e8e8e8;font-family:'Liberation Sans';font-weight:bold;transform-origin:0 0;transform:scaleX(0.6642);">Overprint Fill</div>
<div class="a" style="left:1182px;top:501px;width:7px;height:7px;border:1px solid #6a6a6a"></div>
<div class="t" style="left:1192px;top:501.65px;font-size:7.5px;color:#777;font-family:'Liberation Sans';transform-origin:0 0;transform:scaleX(0.6777);">Overprint Stroke</div>
<div class="a" style="left:2134px;top:48px;width:142px;height:552px;background:#535353"></div>
<div class="a" style="left:2276px;top:53px;width:13px;height:547px;background:#535353;border-left:1px solid #474747"></div>
<svg class="a" style="left:2278px;top:59px" width="9" height="6"><path d="M1 5 L4.5 1.5 L8 5" fill="none" stroke="#aaa" stroke-width="1"/></svg>
<svg class="a" style="left:2278px;top:591px" width="9" height="6"><path d="M1 1 L4.5 4.5 L8 1" fill="none" stroke="#aaa" stroke-width="1"/></svg>
<div class="a" style="left:2280px;top:320px;width:7px;height:14px;background:#6a6a6a;border-radius:3px"></div>
<div class="a" style="left:2135px;top:49px;width:141px;height:151px;background:#535353;border:1px solid #3c3c3c"></div>
<div class="a" style="left:2135px;top:49px;width:141px;height:8px;background:#454545"></div>
<svg class="a" style="left:2254px;top:50px" width="22" height="8"><path d="M5 1.5 L2.5 4 L5 6.5Z M8 1.5 L5.5 4 L8 6.5Z" fill="#d0d0d0" stroke="#d0d0d0" stroke-width="0.6"/><path d="M14.5 2 L18.5 6 M18.5 2 L14.5 6" stroke="#e0e0e0" stroke-width="1.3"/></svg>
<div class="a" style="left:2136px;top:57px;width:139px;height:15.5px;background:#484848"></div>
<div class="a" style="left:2136px;top:57px;width:29px;height:15.5px;background:#535353"></div>
<div class="t" style="left:2144px;top:61.2px;font-size:7.5px;color:#e0e0e0;font-family:'Liberation Sans';font-weight:bold;transform-origin:0 0;transform:scaleX(1.0214);">Color</div>
<div class="t" style="left:2170px;top:61.2px;font-size:7.5px;color:#a8a8a8;font-family:'Liberation Sans';transform-origin:0 0;transform:scaleX(0.8865);">Gradient</div>
<div class="t" style="left:2204px;top:61.2px;font-size:7.5px;color:#a8a8a8;font-family:'Liberation Sans';transform-origin:0 0;transform:scaleX(0.7996);">Swatches</div>
<svg class="a" style="left:2138px;top:61px" width="5" height="8"><path d="M1 3 L2.5 1 L4 3 M1 5 L2.5 7 L4 5" fill="none" stroke="#ccc" stroke-width="0.8"/></svg>
<svg class="a" style="left:2263px;top:62px" width="9" height="8"><g fill="#aaa"><rect x="0" y="0.5" width="9" height="1.2"/><rect x="0" y="3.4" width="9" height="1.2"/><rect x="0" y="6.3" width="9" height="1.2"/></g></svg>
<svg class="a" style="left:2137px;top:76px" width="36" height="36"><rect x="1.5" y="1" width="7" height="7" fill="none" stroke="#ddd" stroke-width="0.8"/><rect x="3.5" y="3" width="4" height="4" fill="#333" stroke="#ddd" stroke-width="0.6"/><path d="M13 3 Q17 3 17 7 M15 1 L13 3 L15 5" fill="none" stroke="#ddd" stroke-width="0.9"/><rect x="7" y="16" width="10" height="10" fill="#fff" stroke="#999" stroke-width="0.6"/><rect x="3" y="12" width="10" height="10" fill="#fff" stroke="#777" stroke-width="0.6"/><rect x="10" y="19" width="6" height="6" fill="#535353"/><line x1="7" y1="27" x2="17" y2="17" stroke="#e01818" stroke-width="1.3"/></svg>
<div class="t" style="left:2167px;top:81.27px;font-size:7px;color:#bbb;font-family:'Liberation Sans';">C</div>
<div class="a" style="left:2177px;top:83.0px;width:59px;height:2.4px;background:linear-gradient(90deg,#fff,#00aeef)"></div>
<svg class="a" style="left:2174px;top:85.2px" width="7" height="6"><path d="M3.5 0.5 L6.5 3 L6.5 5.5 L0.5 5.5 L0.5 3Z" fill="#ddd"/></svg>
<div class="a" style="left:2241px;top:78.7px;width:20px;height:11px;background:#454545"></div>
<div class="t" style="left:2244px;top:81.27px;font-size:7px;color:#ddd;font-family:'Liberation Sans';">0</div>
<div class="t" style="left:2266px;top:81.35px;font-size:7.5px;color:#ccc;font-family:'Liberation Sans';">%</div>
<div class="t" style="left:2167px;top:95.93px;font-size:7px;color:#bbb;font-family:'Liberation Sans';">M</div>
<div class="a" style="left:2177px;top:97.66px;width:59px;height:2.4px;background:linear-gradient(90deg,#fff,#ec008c)"></div>
<svg class="a" style="left:2174px;top:99.86px" width="7" height="6"><path d="M3.5 0.5 L6.5 3 L6.5 5.5 L0.5 5.5 L0.5 3Z" fill="#ddd"/></svg>
<div class="a" style="left:2241px;top:93.36px;width:20px;height:11px;background:#454545"></div>
<div class="t" style="left:2244px;top:95.93px;font-size:7px;color:#ddd;font-family:'Liberation Sans';">0</div>
<div class="t" style="left:2266px;top:96.01px;font-size:7.5px;color:#ccc;font-family:'Liberation Sans';">%</div>
<div class="t" style="left:2167px;top:110.59px;font-size:7px;color:#bbb;font-family:'Liberation Sans';">Y</div>
<div class="a" style="left:2177px;top:112.32000000000001px;width:59px;height:2.4px;background:linear-gradient(90deg,#fff,#fff200)"></div>
<svg class="a" style="left:2174px;top:114.52000000000001px" width="7" height="6"><path d="M3.5 0.5 L6.5 3 L6.5 5.5 L0.5 5.5 L0.5 3Z" fill="#ddd"/></svg>
<div class="a" style="left:2241px;top:108.02000000000001px;width:20px;height:11px;background:#454545"></div>
<div class="t" style="left:2244px;top:110.59px;font-size:7px;color:#ddd;font-family:'Liberation Sans';">0</div>
<div class="t" style="left:2266px;top:110.67px;font-size:7.5px;color:#ccc;font-family:'Liberation Sans';">%</div>
<div class="t" style="left:2167px;top:125.25px;font-size:7px;color:#bbb;font-family:'Liberation Sans';">K</div>
<div class="a" style="left:2177px;top:126.98px;width:59px;height:2.4px;background:linear-gradient(90deg,#fff,#000)"></div>
<svg class="a" style="left:2174px;top:129.18px" width="7" height="6"><path d="M3.5 0.5 L6.5 3 L6.5 5.5 L0.5 5.5 L0.5 3Z" fill="#ddd"/></svg>
<div class="a" style="left:2241px;top:122.68px;width:20px;height:11px;background:#454545"></div>
<div class="t" style="left:2244px;top:125.25px;font-size:7px;color:#ddd;font-family:'Liberation Sans';">0</div>
<div class="t" style="left:2266px;top:125.33px;font-size:7.5px;color:#ccc;font-family:'Liberation Sans';">%</div>
<div class="a" style="left:2139px;top:140px;width:6px;height:7px;background:#fff"></div>
<svg class="a" style="left:2139px;top:140px" width="6" height="7"><line x1="0" y1="7" x2="6" y2="0" stroke="#e01818" stroke-width="1.2"/></svg>
<div class="a" style="left:2146px;top:140px;width:7px;height:7px;background:#000"></div>
<div class="a" style="left:2154px;top:140px;width:7px;height:7px;background:#fff"></div>
<div class="a" style="left:2140px;top:154px;width:126px;height:40px;background:linear-gradient(90deg,#ff0000 0%,#ffff00 17%,#00ff00 33%,#00ffff 50%,#0000ff 67%,#ff00ff 83%,#ff0000 100%)"></div>
<div class="a" style="left:2140px;top:154px;width:126px;height:40px;background:linear-gradient(180deg,rgba(255,255,255,0.95) 0%,rgba(255,255,255,0) 45%,rgba(0,0,0,0) 55%,rgba(0,0,0,1) 100%)"></div>
<div class="a" style="left:2140px;top:154px;width:126px;height:40px;background:rgba(128,128,128,0.15)"></div>
<div class="a" style="left:2135px;top:200px;width:141px;height:100px;background:#535353;border:1px solid #3c3c3c"></div>
<div class="a" style="left:2136px;top:201.5px;width:139px;height:15px;background:#484848"></div>
<div class="a" style="left:2136px;top:201.5px;width:32px;height:15px;background:#535353"></div>
<div class="t" style="left:2144px;top:205.45px;font-size:7.5px;color:#e0e0e0;font-family:'Liberation Sans';font-weight:bold;transform-origin:0 0;transform:scaleX(0.8568);">Stroke</div>
<div class="t" style="left:2173px;top:205.45px;font-size:7.5px;color:#a8a8a8;font-family:'Liberation Sans';transform-origin:0 0;transform:scaleX(0.7996);">Brushes</div>
<svg class="a" style="left:2138px;top:205px" width="5" height="8"><path d="M1 3 L2.5 1 L4 3 M1 5 L2.5 7 L4 5" fill="none" stroke="#ccc" stroke-width="0.8"/></svg>
<svg class="a" style="left:2263px;top:206px" width="9" height="8"><g fill="#aaa"><rect x="0" y="0.5" width="9" height="1.2"/><rect x="0" y="3.4" width="9" height="1.2"/><rect x="0" y="6.3" width="9" height="1.2"/></g></svg>
<div class="t" style="left:2151px;top:223.65px;font-size:7.5px;color:#ddd;font-family:'Liberation Sans';transform-origin:0 0;transform:scaleX(0.8699);">Weight:</div>
<svg class="a" style="left:2173px;top:222px" width="7" height="10"><path d="M1 3.5 L3.5 1 L6 3.5 M1 6.5 L3.5 9 L6 6.5" fill="none" stroke="#ccc" stroke-width="0.9"/></svg>
<div class="a" style="left:2181px;top:222px;width:28px;height:10px;background:#454545"></div>
<svg class="a" style="left:2211px;top:225px" width="8" height="5"><path d="M1 1 L4.0 4 L7 1" fill="none" stroke="#ddd" stroke-width="1.1"/></svg>
<div class="t" style="left:2163px;top:239.57px;font-size:7px;color:#7a7a7a;font-family:'Liberation Sans';transform-origin:0 0;transform:scaleX(0.7440);">Cap:</div>
<div class="t" style="left:2152px;top:255.07px;font-size:7px;color:#7a7a7a;font-family:'Liberation Sans';transform-origin:0 0;transform:scaleX(0.8998);">Corner:</div>
<div class="t" style="left:2137px;top:271.07px;font-size:7px;color:#7a7a7a;font-family:'Liberation Sans';transform-origin:0 0;transform:scaleX(0.7873);">Align Strokes:</div>
<div class="t" style="left:2227px;top:255.07px;font-size:7px;color:#6a6a6a;font-family:'Liberation Sans';transform-origin:0 0;transform:scaleX(0.8371);">Limit:</div>
<div class="a" style="left:2246px;top:253px;width:19px;height:10px;background:#4c4c4c"></div>
<div class="a" style="left:2175px;top:237px;width:11px;height:11px;background:#4e4e4e;border:1px solid #5c5c5c"></div>
<div class="a" style="left:2178px;top:240px;width:5px;height:5px;border:1px solid #777"></div>
<div class="a" style="left:2189px;top:237px;width:11px;height:11px;background:#4e4e4e;border:1px solid #5c5c5c"></div>
<div class="a" style="left:2192px;top:240px;width:5px;height:5px;border:1px solid #777"></div>
<div class="a" style="left:2203px;top:237px;width:11px;height:11px;background:#4e4e4e;border:1px solid #5c5c5c"></div>
<div class="a" style="left:2206px;top:240px;width:5px;height:5px;border:1px solid #777"></div>
<div class="a" style="left:2175px;top:253px;width:11px;height:11px;background:#4e4e4e;border:1px solid #5c5c5c"></div>
<div class="a" style="left:2178px;top:256px;width:5px;height:5px;border:1px solid #777"></div>
<div class="a" style="left:2189px;top:253px;width:11px;height:11px;background:#4e4e4e;border:1px solid #5c5c5c"></div>
<div class="a" style="left:2192px;top:256px;width:5px;height:5px;border:1px solid #777"></div>
<div class="a" style="left:2203px;top:253px;width:11px;height:11px;background:#4e4e4e;border:1px solid #5c5c5c"></div>
<div class="a" style="left:2206px;top:256px;width:5px;height:5px;border:1px solid #777"></div>
<div class="a" style="left:2175px;top:269px;width:11px;height:11px;background:#4e4e4e;border:1px solid #5c5c5c"></div>
<div class="a" style="left:2178px;top:272px;width:5px;height:5px;border:1px solid #777"></div>
<div class="a" style="left:2189px;top:269px;width:11px;height:11px;background:#4e4e4e;border:1px solid #5c5c5c"></div>
<div class="a" style="left:2192px;top:272px;width:5px;height:5px;border:1px solid #777"></div>
<div class="a" style="left:2203px;top:269px;width:11px;height:11px;background:#4e4e4e;border:1px solid #5c5c5c"></div>
<div class="a" style="left:2206px;top:272px;width:5px;height:5px;border:1px solid #777"></div>
<div class="a" style="left:2138px;top:289px;width:9px;height:9px;background:#ddd"></div>
<div class="a" style="left:2140px;top:293px;width:5px;height:1.5px;background:#333"></div>
<div class="t" style="left:2150px;top:290.65px;font-size:7.5px;color:#e8e8e8;font-family:'Liberation Sans';font-weight:bold;transform-origin:0 0;transform:scaleX(0.6279);">Dashed Line</div>
<div class="a" style="left:2229px;top:287px;width:22px;height:11px;border:1px solid #5e5e5e"></div>
<div class="a" style="left:2232px;top:290px;width:16px;height:5px;border:1px dashed #888"></div>
<div class="a" style="left:2253px;top:287px;width:22px;height:11px;border:1px solid #5e5e5e"></div>
<div class="a" style="left:2256px;top:290px;width:16px;height:5px;border:1px dashed #888"></div>
<div class="a" style="left:2135px;top:300px;width:141px;height:85px;background:#535353;border:1px solid #3c3c3c"></div>
<div class="a" style="left:2135px;top:300px;width:141px;height:7px;background:#454545"></div>
<svg class="a" style="left:2254px;top:300px" width="22" height="8"><path d="M5 1.5 L2.5 4 L5 6.5Z M8 1.5 L5.5 4 L8 6.5Z" fill="#d0d0d0" stroke="#d0d0d0" stroke-width="0.6"/><path d="M14.5 2 L18.5 6 M18.5 2 L14.5 6" stroke="#e0e0e0" stroke-width="1.3"/></svg>
<div class="a" style="left:2136px;top:307px;width:139px;height:15px;background:#484848"></div>
<div class="a" style="left:2136px;top:307px;width:54px;height:15px;background:#535353"></div>
<div class="t" style="left:2144px;top:310.95px;font-size:7.5px;color:#e0e0e0;font-family:'Liberation Sans';font-weight:bold;transform-origin:0 0;transform:scaleX(0.8611);">Transparency</div>
<div class="t" style="left:2191px;top:310.95px;font-size:7.5px;color:#a8a8a8;font-family:'Liberation Sans';transform-origin:0 0;transform:scaleX(0.8406);">Appearance</div>
<svg class="a" style="left:2138px;top:311px" width="5" height="8"><path d="M1 3 L2.5 1 L4 3 M1 5 L2.5 7 L4 5" fill="none" stroke="#ccc" stroke-width="0.8"/></svg>
<svg class="a" style="left:2263px;top:312px" width="9" height="8"><g fill="#aaa"><rect x="0" y="0.5" width="9" height="1.2"/><rect x="0" y="3.4" width="9" height="1.2"/><rect x="0" y="6.3" width="9" height="1.2"/></g></svg>
<div class="a" style="left:2139px;top:328px;width:53px;height:11px;background:#454545;border:1px solid #5a5a5a"></div>
<div class="t" style="left:2142px;top:330.15px;font-size:7.5px;color:#eee;font-family:'Liberation Sans';font-weight:bold;transform-origin:0 0;transform:scaleX(0.7740);">Normal</div>
<svg class="a" style="left:2181px;top:331px" width="8" height="5"><path d="M1 1 L4.0 4 L7 1" fill="none" stroke="#ddd" stroke-width="1.1"/></svg>
<div class="t" style="left:2196px;top:330.57px;font-size:7px;color:#ccc;font-family:'Liberation Sans';transform-origin:0 0;transform:scaleX(0.8958);">Opacity:</div>
<div class="a" style="left:2219px;top:328px;width:31px;height:11px;background:#454545;border:1px solid #5a5a5a"></div>
<div class="t" style="left:2222px;top:329.65px;font-size:7.5px;color:#eee;font-family:'Liberation Sans';transform-origin:0 0;transform:scaleX(0.7820);">100%</div>
<svg class="a" style="left:2252px;top:330px" width="6" height="8"><path d="M1.5 1 L4.5 4 L1.5 7" fill="none" stroke="#ddd" stroke-width="1.1"/></svg>
<div class="a" style="left:2139px;top:347px;width:50px;height:35px;border:1px solid #4c4c4c;background:#505050"></div>
<div class="a" style="left:2221px;top:347px;width:48px;height:12px;background:#4e4e4e"></div>
<div class="t" style="left:2228px;top:349.57px;font-size:7px;color:#777;font-family:'Liberation Sans';transform-origin:0 0;transform:scaleX(0.7545);">Make Mask</div>
<div class="a" style="left:2222px;top:361px;width:7px;height:7px;border:1px solid #6a6a6a"></div>
<div class="t" style="left:2233px;top:361.57px;font-size:7px;color:#777;font-family:'Liberation Sans';transform-origin:0 0;transform:scaleX(0.7464);">Clip</div>
<div class="a" style="left:2222px;top:373px;width:7px;height:7px;border:1px solid #6a6a6a"></div>
<div class="t" style="left:2233px;top:373.57px;font-size:7px;color:#777;font-family:'Liberation Sans';transform-origin:0 0;transform:scaleX(0.7740);">Invert Mask</div>
<div class="a" style="left:2135px;top:388px;width:135px;height:90px;background:#535353;border:1px solid #3c3c3c"></div>
<div class="a" style="left:2135px;top:388px;width:135px;height:9px;background:#454545"></div>
<svg class="a" style="left:2248px;top:389px" width="22" height="8"><path d="M5 1.5 L2.5 4 L5 6.5Z M8 1.5 L5.5 4 L8 6.5Z" fill="#d0d0d0" stroke="#d0d0d0" stroke-width="0.6"/><path d="M14.5 2 L18.5 6 M18.5 2 L14.5 6" stroke="#e0e0e0" stroke-width="1.3"/></svg>
<div class="a" style="left:2136px;top:397px;width:133px;height:16px;background:#484848"></div>
<div class="t" style="left:2141px;top:401.45px;font-size:7.5px;color:#a8a8a8;font-family:'Liberation Sans';transform-origin:0 0;transform:scaleX(0.8557);">Transform</div>
<div class="t" style="left:2180px;top:401.45px;font-size:7.5px;color:#a8a8a8;font-family:'Liberation Sans';transform-origin:0 0;transform:scaleX(0.8994);">Align</div>
<div class="a" style="left:2200px;top:397px;width:40px;height:16px;background:#535353"></div>
<div class="t" style="left:2205px;top:401.45px;font-size:7.5px;color:#e0e0e0;font-family:'Liberation Sans';font-weight:bold;transform-origin:0 0;transform:scaleX(0.8629);">Pathfinder</div>
<svg class="a" style="left:2257px;top:403px" width="9" height="8"><g fill="#aaa"><rect x="0" y="0.5" width="9" height="1.2"/><rect x="0" y="3.4" width="9" height="1.2"/><rect x="0" y="6.3" width="9" height="1.2"/></g></svg>
<div class="t" style="left:2139px;top:418.07px;font-size:7px;color:#ccc;font-family:'Liberation Sans';transform-origin:0 0;transform:scaleX(0.7754);">Shape Modes:</div>
<div class="t" style="left:2139px;top:448.07px;font-size:7px;color:#ccc;font-family:'Liberation Sans';transform-origin:0 0;transform:scaleX(0.8299);">Pathfinders:</div>
<svg class="a" style="left:2142px;top:431px" width="12" height="11"><rect x="0.5" y="0.5" width="7" height="7" fill="#ccc"/><rect x="3.5" y="3.5" width="7" height="7" fill="#ccc" stroke="#ccc" stroke-width="1"/></svg>
<svg class="a" style="left:2164px;top:431px" width="12" height="11"><rect x="0.5" y="0.5" width="7" height="7" fill="#ccc"/><rect x="3.5" y="3.5" width="7" height="7" fill="#535353" stroke="#ccc" stroke-width="1"/></svg>
<svg class="a" style="left:2186px;top:431px" width="12" height="11"><rect x="0.5" y="0.5" width="7" height="7" fill="#ccc"/><rect x="3.5" y="3.5" width="7" height="7" fill="#535353" stroke="#ccc" stroke-width="1"/></svg>
<svg class="a" style="left:2208px;top:431px" width="12" height="11"><rect x="0.5" y="0.5" width="7" height="7" fill="#ccc"/><rect x="3.5" y="3.5" width="7" height="7" fill="#535353" stroke="#ccc" stroke-width="1"/></svg>
<div class="a" style="left:2226px;top:430px;width:41px;height:11px;background:#585858"></div>
<div class="t" style="left:2237px;top:432.57px;font-size:7px;color:#777;font-family:'Liberation Sans';transform-origin:0 0;transform:scaleX(0.8425);">Expand</div>
<svg class="a" style="left:2142px;top:462px" width="12" height="11"><rect x="0.5" y="0.5" width="7" height="7" fill="none" stroke="#ccc" stroke-width="1"/><rect x="3.5" y="3.5" width="7" height="7" fill="none" stroke="#ccc" stroke-width="1"/></svg>
<svg class="a" style="left:2164px;top:462px" width="12" height="11"><rect x="0.5" y="0.5" width="7" height="7" fill="none" stroke="#ccc" stroke-width="1"/><rect x="3.5" y="3.5" width="7" height="7" fill="#ccc" stroke="#ccc" stroke-width="1"/></svg>
<svg class="a" style="left:2186px;top:462px" width="12" height="11"><rect x="0.5" y="0.5" width="7" height="7" fill="none" stroke="#ccc" stroke-width="1"/><rect x="3.5" y="3.5" width="7" height="7" fill="#ccc" stroke="#ccc" stroke-width="1"/></svg>
<svg class="a" style="left:2208px;top:462px" width="12" height="11"><rect x="0.5" y="0.5" width="7" height="7" fill="none" stroke="#ccc" stroke-width="1"/><rect x="3.5" y="3.5" width="7" height="7" fill="none" stroke="#ccc" stroke-width="1"/></svg>
<svg class="a" style="left:2230px;top:462px" width="12" height="11"><rect x="0.5" y="0.5" width="7" height="7" fill="none" stroke="#ccc" stroke-width="1"/><rect x="3.5" y="3.5" width="7" height="7" fill="none" stroke="#ccc" stroke-width="1"/></svg>
<svg class="a" style="left:2252px;top:462px" width="12" height="11"><rect x="0.5" y="0.5" width="7" height="7" fill="none" stroke="#ccc" stroke-width="1"/><rect x="3.5" y="3.5" width="7" height="7" fill="#ccc" stroke="#ccc" stroke-width="1"/></svg>
<div class="a" style="left:2135px;top:482px;width:140px;height:118px;background:#535353;border:1px solid #3c3c3c"></div>
<div class="a" style="left:2135px;top:482px;width:140px;height:8px;background:#454545"></div>
<svg class="a" style="left:2253px;top:482px" width="22" height="8"><path d="M5 1.5 L2.5 4 L5 6.5Z M8 1.5 L5.5 4 L8 6.5Z" fill="#d0d0d0" stroke="#d0d0d0" stroke-width="0.6"/><path d="M14.5 2 L18.5 6 M18.5 2 L14.5 6" stroke="#e0e0e0" stroke-width="1.3"/></svg>
<div class="a" style="left:2136px;top:490px;width:138px;height:16px;background:#484848"></div>
<div class="a" style="left:2136px;top:490px;width:26px;height:16px;background:#535353"></div>
<div class="t" style="left:2140px;top:494.45px;font-size:7.5px;color:#e0e0e0;font-family:'Liberation Sans';font-weight:bold;transform-origin:0 0;transform:scaleX(0.7030);">Layers</div>
<svg class="a" style="left:2262px;top:496px" width="9" height="8"><g fill="#aaa"><rect x="0" y="0.5" width="9" height="1.2"/><rect x="0" y="3.4" width="9" height="1.2"/><rect x="0" y="6.3" width="9" height="1.2"/></g></svg>
<div class="a" style="left:2138px;top:508px;width:135px;height:77px;border:1px solid #4a4a4a"></div>
<div class="a" style="left:2138px;top:510px;width:135px;height:12px;background:#4b5d78"></div>
<svg class="a" style="left:2140px;top:513px" width="10" height="6"><path d="M0.5 3 Q5 -1 9.5 3 Q5 7 0.5 3Z" fill="none" stroke="#ddd" stroke-width="0.9"/><circle cx="5" cy="3" r="1.3" fill="#ddd"/></svg>
<div class="a" style="left:2164px;top:511px;width:1.5px;height:10px;background:#6ea0ff"></div>
<svg class="a" style="left:2170px;top:513px" width="6" height="8"><path d="M1.5 1 L4.5 4 L1.5 7" fill="none" stroke="#eee" stroke-width="1.1"/></svg>
<div class="a" style="left:2181px;top:511px;width:10px;height:10px;background:#fff;border:1px solid #999"></div>
<div class="a" style="left:2183px;top:515px;width:6px;height:3px;border-top:1px solid #e06060;border-bottom:1px solid #e06060"></div>
<div class="t" style="left:2194px;top:513.15px;font-size:7.5px;color:#eee;font-family:'Liberation Sans';transform-origin:0 0;transform:scaleX(0.8795);">Layer 1</div>
<svg class="a" style="left:2254px;top:512px" width="8" height="8"><circle cx="4" cy="4" r="2.8" fill="none" stroke="#ddd" stroke-width="0.9"/></svg>
<svg class="a" style="left:2268px;top:510px" width="5" height="5"><path d="M0 0 L5 0 L5 5Z" fill="#eee"/></svg>
<div class="t" style="left:2139px;top:586.65px;font-size:7.5px;color:#e8e8e8;font-family:'Liberation Sans';font-weight:bold;transform-origin:0 0;transform:scaleX(0.7234);">1 Layer</div>
<svg class="a" style="left:2178px;top:585px" width="10" height="10"><rect x="1" y="3" width="6" height="6" fill="none" stroke="#ccc"/><path d="M5 1 L9 1 L9 5 M9 1 L5 5" stroke="#ccc" fill="none"/></svg>
<svg class="a" style="left:2193px;top:585px" width="10" height="10"><circle cx="5" cy="4" r="3" fill="none" stroke="#777"/><line x1="3" y1="6" x2="1" y2="9" stroke="#777"/></svg>
<svg class="a" style="left:2207px;top:585px" width="10" height="10"><rect x="1" y="1" width="8" height="8" fill="none" stroke="#ccc"/><rect x="3" y="3" width="5" height="5" fill="#ccc"/></svg>
<svg class="a" style="left:2223px;top:585px" width="10" height="10"><rect x="0" y="2" width="3" height="3" fill="#ccc"/><rect x="3" y="3" width="6" height="6" fill="#ccc"/></svg>
<svg class="a" style="left:2239px;top:585px" width="10" height="10"><rect x="1" y="1" width="8" height="8" fill="#ccc"/><rect x="2" y="2" width="3" height="3" fill="#535353"/></svg>
<svg class="a" style="left:2254px;top:585px" width="10" height="10"><rect x="2" y="2" width="6" height="7" fill="none" stroke="#777"/><line x1="1" y1="2" x2="9" y2="2" stroke="#777"/></svg>
</body></html>
